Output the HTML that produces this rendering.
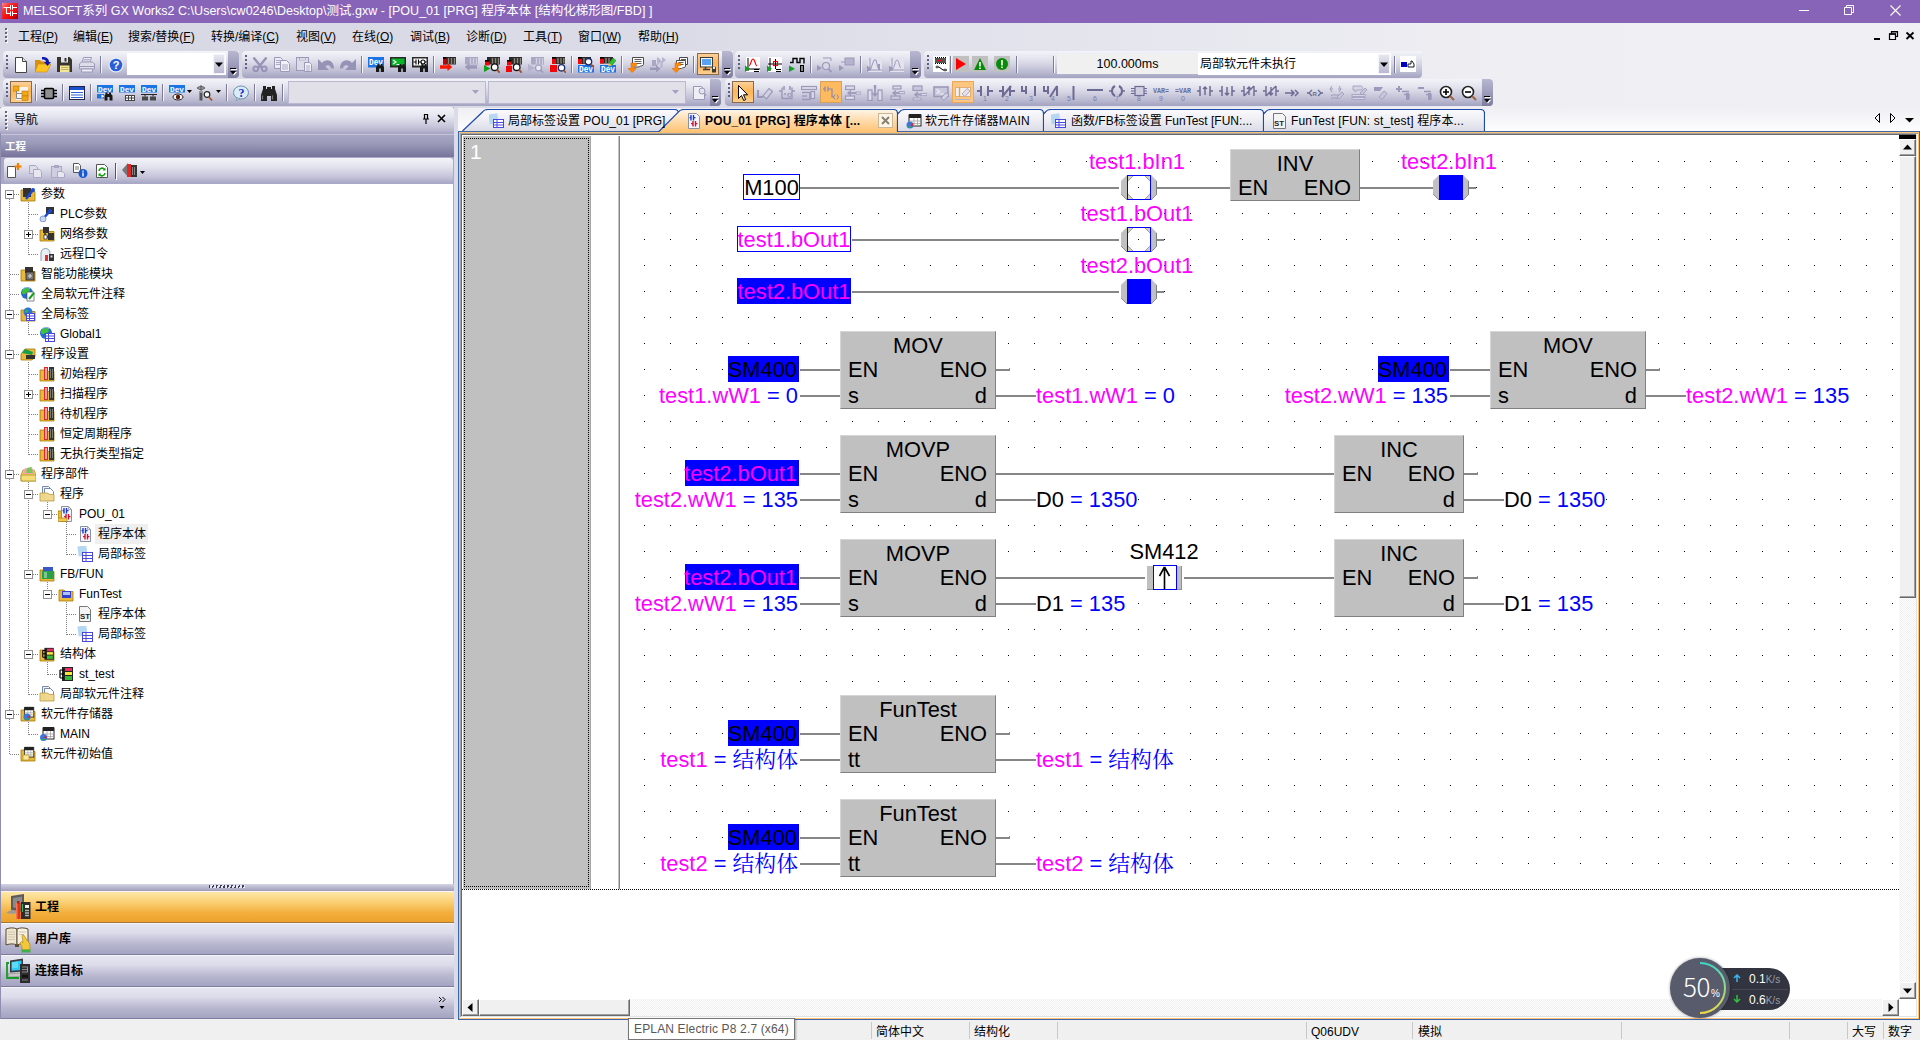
<!DOCTYPE html>
<html lang="zh-CN"><head><meta charset="utf-8"><title>MELSOFT GX Works2</title>
<style>
*{box-sizing:border-box}
html,body{margin:0;padding:0}
body{width:1920px;height:1040px;position:relative;overflow:hidden;background:#f0f0f0;font-family:"Liberation Sans","Noto Sans CJK SC",sans-serif;font-size:12px;color:#000}
.a{position:absolute}
.t{position:absolute;white-space:nowrap;line-height:16px}
#title{left:0;top:0;width:1920px;height:23px;background:#8764b8}
#menubg{left:0;top:23px;width:1920px;height:85px;background:linear-gradient(90deg,#d9d9e6 0,#dcdce8 40%,#ececf2 75%,#f0f0f4 100%)}
.tb{position:absolute;height:27px;border-radius:4px 0 4px 4px;background:linear-gradient(180deg,#f3f3f9 0,#e3e3ee 30%,#cfcfe0 55%,#b4b3cd 85%,#a3a2c0 100%)}
.tbo{position:absolute;top:0;right:0;width:11px;height:27px;border-radius:0 4px 4px 0;background:linear-gradient(180deg,#b9b8d0 0,#a09fbd 45%,#7f7d9e 100%)}
.grip{position:absolute;left:3px;top:4px;width:2px;height:14px;background:repeating-linear-gradient(180deg,#5f5d80 0,#5f5d80 2px,transparent 2px,transparent 4px)}
.grip:after{content:"";position:absolute;left:1px;top:1px;width:2px;height:14px;background:repeating-linear-gradient(180deg,#fff 0,#fff 2px,transparent 2px,transparent 4px);z-index:-1}
.sep{position:absolute;top:5px;width:2px;height:17px;border-left:1px solid #7f7d9e;border-right:1px solid #f4f4fa}
.sel{position:absolute;top:2px;width:22px;height:23px;border:1px solid #8a6a45;background:linear-gradient(180deg,#fbcf93 0,#fdb759 50%,#fcc779 100%)}
.d{font-family:"Liberation Sans","Noto Serif CJK SC",sans-serif;font-size:21.85px;line-height:26px}
.ic{position:absolute;width:16px;height:16px}

.m{position:absolute;top:29px;line-height:16px;white-space:nowrap;font-size:12px}
.ov{position:absolute;right:2px;top:17px;width:7px;height:8px}
.cb{position:absolute;background:#fff}
.tab{position:absolute;top:109px;height:23px}
.tt{position:absolute;top:113px;line-height:16px;white-space:nowrap;font-size:12px}

.tr{position:absolute;line-height:16px;white-space:nowrap;font-size:12px}
.pb{position:absolute;left:0;width:454px;height:32px;background:linear-gradient(180deg,#e6e6f0 0,#dcdcea 30%,#bdbcd3 60%,#a4a3c1 100%);border-top:1px solid #f4f4fa;border-bottom:1px solid #7f7d9e}
.pbt{position:absolute;left:35px;top:7px;font-weight:bold;font-size:12px;line-height:16px;white-space:nowrap}
</style></head>
<body>
<div class="a" style="left:458px;top:131px;width:1462px;height:889px;background:#3e66a8"></div>
<div class="a" style="left:459px;top:132px;width:1460px;height:887px;background:#fcc171"></div>
<div class="a" style="left:460px;top:133px;width:1458px;height:885px;background:#fff"></div>
<div class="a" style="left:460px;top:133px;width:1458px;height:1px;background:#a3a3a3"></div>
<div class="a" style="left:460px;top:134px;width:1457px;height:1px;background:#696969"></div>
<div class="a" style="left:460px;top:133px;width:1px;height:884px;background:#a3a3a3"></div>
<div class="a" style="left:461px;top:134px;width:1px;height:883px;background:#696969"></div>
<div class="a" style="left:461px;top:1016px;width:1456px;height:1px;background:#e3e3e3"></div>
<div class="a" style="left:1916px;top:134px;width:1px;height:883px;background:#e3e3e3"></div>
<div class="a" style="left:463px;top:136px;width:128px;height:753px;background:#c0c0c0"></div>
<div class="a" style="left:464px;top:138px;width:125px;height:749px;border:1px dotted #000"></div>
<div class="a" style="left:590px;top:136px;width:1px;height:753px;background:#a8a8a8"></div>
<div class="t" style="left:470px;top:140px;color:#fff;font-size:21px;line-height:24px">1</div>
<div class="a" style="left:618px;top:136px;width:1px;height:753px;background:#c4c4c4"></div>
<div class="a" style="left:619px;top:136px;width:1px;height:753px;background:#858585"></div>
<div class="a" style="left:462px;top:889px;width:1437px;height:1px;background:repeating-linear-gradient(90deg,#000 0,#000 1px,#fff 1px,#fff 2px)"></div>
<div class="a" style="left:1899px;top:135px;width:17px;height:864px;background:repeating-conic-gradient(#fff 0 25%,#efefef 0 50%) 0 0/2px 2px"></div>
<div class="a" style="left:1899px;top:135px;width:17px;height:4px;background:#000"></div>
<div class="a" style="left:1899px;top:139px;width:17px;height:17px;background:#f0f0f0;border-top:1px solid #fff;border-left:1px solid #fff;border-right:1px solid #696969;border-bottom:1px solid #696969;box-shadow:inset -1px -1px 0 #a0a0a0,inset 1px 1px 0 #f0f0f0"></div>
<svg class="a" style="left:1903px;top:144px" width="9" height="6"><path d="M0 5.500L4.500 0.500L9 5.500Z" fill="#000"/></svg>
<div class="a" style="left:1899px;top:156px;width:17px;height:442px;background:#f0f0f0;border-top:1px solid #fff;border-left:1px solid #fff;border-right:1px solid #696969;border-bottom:1px solid #696969;box-shadow:inset -1px -1px 0 #a0a0a0,inset 1px 1px 0 #f0f0f0"></div>
<div class="a" style="left:1899px;top:982px;width:17px;height:17px;background:#f0f0f0;border-top:1px solid #fff;border-left:1px solid #fff;border-right:1px solid #696969;border-bottom:1px solid #696969;box-shadow:inset -1px -1px 0 #a0a0a0,inset 1px 1px 0 #f0f0f0"></div>
<svg class="a" style="left:1903px;top:988px" width="9" height="6"><path d="M0 0.500L4.500 5.500L9 0.500Z" fill="#000"/></svg>
<div class="a" style="left:462px;top:999px;width:1437px;height:17px;background:repeating-conic-gradient(#fff 0 25%,#efefef 0 50%) 0 0/2px 2px"></div>
<div class="a" style="left:462px;top:999px;width:17px;height:17px;background:#f0f0f0;border-top:1px solid #fff;border-left:1px solid #fff;border-right:1px solid #696969;border-bottom:1px solid #696969;box-shadow:inset -1px -1px 0 #a0a0a0,inset 1px 1px 0 #f0f0f0"></div>
<svg class="a" style="left:467px;top:1003px" width="6" height="9"><path d="M5.500 0L0.500 4.500L5.500 9Z" fill="#000"/></svg>
<div class="a" style="left:479px;top:999px;width:151px;height:17px;background:#f0f0f0;border-top:1px solid #fff;border-left:1px solid #fff;border-right:1px solid #696969;border-bottom:1px solid #696969;box-shadow:inset -1px -1px 0 #a0a0a0,inset 1px 1px 0 #f0f0f0"></div>
<div class="a" style="left:1882px;top:999px;width:17px;height:17px;background:#f0f0f0;border-top:1px solid #fff;border-left:1px solid #fff;border-right:1px solid #696969;border-bottom:1px solid #696969;box-shadow:inset -1px -1px 0 #a0a0a0,inset 1px 1px 0 #f0f0f0"></div>
<svg class="a" style="left:1888px;top:1003px" width="6" height="9"><path d="M0.500 0L5.500 4.500L0.500 9Z" fill="#000"/></svg>
<div class="a" style="left:620px;top:136px;width:1278px;height:752px;background-image:radial-gradient(circle at .5px .5px,#000 0,#000 .6px,transparent .9px);background-size:26px 26px;background-position:24px 25px"></div>
<div class="a" style="left:743px;top:174px;width:57px;height:26px;border:1px solid #0000ff;background:#fff"></div>
<div class="t d" style="left:743px;top:175px;width:57px;text-align:center">M100</div>
<div class="a" style="left:800px;top:187px;width:319px;height:2px;background:#868686"></div>
<svg class="a" style="left:1120px;top:174px" width="38" height="27" viewBox="0 0 38 27"><polygon points="1,7 7,1 31,1 37,7 37,20 31,26 7,26 1,20" fill="#c0c0c0"/><path d="M36.5 7V20" stroke="#808080" stroke-width="1" fill="none"/><path d="M1 20L7 26M37 20L31 26" stroke="#909090" stroke-width="1" fill="none"/><rect x="7.5" y="1.5" width="23" height="24" fill="#d4d0c0" stroke="#0000ff" stroke-width="1"/><polygon points="13,2 25,2 30,7 30,20 25,25 13,25 8,20 8,7" fill="#fff"/><path d="M8 7L13 2M25 2L30 7M30 20L25 25M13 25L8 20" stroke="#a0a0a0" stroke-width="1" fill="none"/><rect x="18" y="13" width="1" height="1" fill="#000"/></svg>
<div class="a" style="left:1157px;top:187px;width:73px;height:2px;background:#868686"></div>
<div class="t d" style="left:1037px;top:149px;color:#ff00ff;width:200px;text-align:center">test1.bIn1</div>
<div class="a" style="left:1230px;top:149px;width:130px;height:52px;background:#c0c0c0;border-top:1px solid #d6d6d6;border-left:1px solid #d6d6d6;border-right:1px solid #808080;border-bottom:1px solid #808080"></div><div class="t d" style="left:1230px;top:151px;width:130px;text-align:center">INV</div><div class="t d" style="left:1238px;top:175px;">EN</div><div class="t d" style="left:1230px;top:175px;width:121px;text-align:right">ENO</div>
<div class="a" style="left:1360px;top:187px;width:73px;height:2px;background:#868686"></div>
<svg class="a" style="left:1432px;top:174px" width="38" height="27" viewBox="0 0 38 27"><polygon points="1,7 7,1 31,1 37,7 37,20 31,26 7,26 1,20" fill="#c0c0c0"/><path d="M36.5 7V20" stroke="#808080" stroke-width="1" fill="none"/><path d="M1 20L7 26M37 20L31 26" stroke="#909090" stroke-width="1" fill="none"/><rect x="7" y="1" width="24" height="25" fill="#0000ff"/></svg>
<div class="a" style="left:1469px;top:187px;width:7px;height:2px;background:#868686"></div>
<div class="t d" style="left:1349px;top:149px;color:#ff00ff;width:200px;text-align:center">test2.bIn1</div>
<div class="a" style="left:737px;top:226px;width:114px;height:26px;border:1px solid #0000ff;background:#fff"></div>
<div class="t d" style="left:737px;top:227px;width:114px;text-align:center;color:#ff00ff">test1.bOut1</div>
<div class="a" style="left:852px;top:239px;width:267px;height:2px;background:#868686"></div>
<svg class="a" style="left:1120px;top:226px" width="38" height="27" viewBox="0 0 38 27"><polygon points="1,7 7,1 31,1 37,7 37,20 31,26 7,26 1,20" fill="#c0c0c0"/><path d="M36.5 7V20" stroke="#808080" stroke-width="1" fill="none"/><path d="M1 20L7 26M37 20L31 26" stroke="#909090" stroke-width="1" fill="none"/><rect x="7.5" y="1.5" width="23" height="24" fill="#d4d0c0" stroke="#0000ff" stroke-width="1"/><polygon points="13,2 25,2 30,7 30,20 25,25 13,25 8,20 8,7" fill="#fff"/><path d="M8 7L13 2M25 2L30 7M30 20L25 25M13 25L8 20" stroke="#a0a0a0" stroke-width="1" fill="none"/><rect x="18" y="13" width="1" height="1" fill="#000"/></svg>
<div class="a" style="left:1157px;top:239px;width:7px;height:2px;background:#868686"></div>
<div class="t d" style="left:1037px;top:201px;color:#ff00ff;width:200px;text-align:center">test1.bOut1</div>
<div class="a" style="left:737px;top:278px;width:114px;height:26px;background:#0000ff"></div>
<div class="t d" style="left:737px;top:279px;width:114px;text-align:center;color:#ff00ff">test2.bOut1</div>
<div class="a" style="left:852px;top:291px;width:267px;height:2px;background:#868686"></div>
<svg class="a" style="left:1120px;top:278px" width="38" height="27" viewBox="0 0 38 27"><polygon points="1,7 7,1 31,1 37,7 37,20 31,26 7,26 1,20" fill="#c0c0c0"/><path d="M36.5 7V20" stroke="#808080" stroke-width="1" fill="none"/><path d="M1 20L7 26M37 20L31 26" stroke="#909090" stroke-width="1" fill="none"/><rect x="7" y="1" width="24" height="25" fill="#0000ff"/></svg>
<div class="a" style="left:1157px;top:291px;width:7px;height:2px;background:#868686"></div>
<div class="t d" style="left:1037px;top:253px;color:#ff00ff;width:200px;text-align:center">test2.bOut1</div>
<div class="a" style="left:728px;top:356px;width:71px;height:26px;background:#0000ff"></div><div class="t d" style="top:357px;right:1123px;">SM400</div>
<div class="a" style="left:800px;top:369px;width:40px;height:2px;background:#868686"></div>
<div class="t d" style="top:383px;right:1122px;left:auto;background:#fff;height:25px;"><span style="color:#ff00ff">test1.wW1</span><span style="color:#0000ff"> = 0</span></div>
<div class="a" style="left:800px;top:395px;width:40px;height:2px;background:#868686"></div>
<div class="a" style="left:840px;top:331px;width:156px;height:78px;background:#c0c0c0;border-top:1px solid #d6d6d6;border-left:1px solid #d6d6d6;border-right:1px solid #808080;border-bottom:1px solid #808080"></div><div class="t d" style="left:840px;top:333px;width:156px;text-align:center">MOV</div><div class="t d" style="left:848px;top:357px;">EN</div><div class="t d" style="left:848px;top:383px;">s</div><div class="t d" style="left:840px;top:357px;width:147px;text-align:right">ENO</div><div class="t d" style="left:840px;top:383px;width:147px;text-align:right">d</div>
<div class="a" style="left:996px;top:369px;width:14px;height:2px;background:#868686"></div><div class="a" style="left:1009px;top:368px;width:1px;height:2px;background:#868686"></div>
<div class="a" style="left:996px;top:395px;width:40px;height:2px;background:#868686"></div>
<div class="t d" style="left:1036px;top:383px;background:#fff;height:25px"><span style="color:#ff00ff">test1.wW1</span><span style="color:#0000ff"> = 0</span></div>
<div class="a" style="left:1378px;top:356px;width:71px;height:26px;background:#0000ff"></div><div class="t d" style="top:357px;right:473px;">SM400</div>
<div class="a" style="left:1450px;top:369px;width:40px;height:2px;background:#868686"></div>
<div class="t d" style="top:383px;right:472px;left:auto;background:#fff;height:25px;"><span style="color:#ff00ff">test2.wW1</span><span style="color:#0000ff"> = 135</span></div>
<div class="a" style="left:1450px;top:395px;width:40px;height:2px;background:#868686"></div>
<div class="a" style="left:1490px;top:331px;width:156px;height:78px;background:#c0c0c0;border-top:1px solid #d6d6d6;border-left:1px solid #d6d6d6;border-right:1px solid #808080;border-bottom:1px solid #808080"></div><div class="t d" style="left:1490px;top:333px;width:156px;text-align:center">MOV</div><div class="t d" style="left:1498px;top:357px;">EN</div><div class="t d" style="left:1498px;top:383px;">s</div><div class="t d" style="left:1490px;top:357px;width:147px;text-align:right">ENO</div><div class="t d" style="left:1490px;top:383px;width:147px;text-align:right">d</div>
<div class="a" style="left:1646px;top:369px;width:14px;height:2px;background:#868686"></div><div class="a" style="left:1659px;top:368px;width:1px;height:2px;background:#868686"></div>
<div class="a" style="left:1646px;top:395px;width:40px;height:2px;background:#868686"></div>
<div class="t d" style="left:1686px;top:383px;background:#fff;height:25px"><span style="color:#ff00ff">test2.wW1</span><span style="color:#0000ff"> = 135</span></div>
<div class="a" style="left:685px;top:460px;width:114px;height:26px;background:#0000ff"></div><div class="t d" style="top:461px;right:1123px;"><span style="color:#ff00ff">test2.bOut1</span></div>
<div class="a" style="left:800px;top:473px;width:40px;height:2px;background:#868686"></div>
<div class="t d" style="top:487px;right:1122px;left:auto;background:#fff;height:25px;"><span style="color:#ff00ff">test2.wW1</span><span style="color:#0000ff"> = 135</span></div>
<div class="a" style="left:800px;top:499px;width:40px;height:2px;background:#868686"></div>
<div class="a" style="left:840px;top:435px;width:156px;height:78px;background:#c0c0c0;border-top:1px solid #d6d6d6;border-left:1px solid #d6d6d6;border-right:1px solid #808080;border-bottom:1px solid #808080"></div><div class="t d" style="left:840px;top:437px;width:156px;text-align:center">MOVP</div><div class="t d" style="left:848px;top:461px;">EN</div><div class="t d" style="left:848px;top:487px;">s</div><div class="t d" style="left:840px;top:461px;width:147px;text-align:right">ENO</div><div class="t d" style="left:840px;top:487px;width:147px;text-align:right">d</div>
<div class="a" style="left:996px;top:473px;width:338px;height:2px;background:#868686"></div>
<div class="a" style="left:996px;top:499px;width:40px;height:2px;background:#868686"></div>
<div class="t d" style="left:1036px;top:487px;background:#fff;height:25px">D0<span style="color:#0000ff"> = 1350</span></div>
<div class="a" style="left:1334px;top:435px;width:130px;height:78px;background:#c0c0c0;border-top:1px solid #d6d6d6;border-left:1px solid #d6d6d6;border-right:1px solid #808080;border-bottom:1px solid #808080"></div><div class="t d" style="left:1334px;top:437px;width:130px;text-align:center">INC</div><div class="t d" style="left:1342px;top:461px;">EN</div><div class="t d" style="left:1334px;top:461px;width:121px;text-align:right">ENO</div><div class="t d" style="left:1334px;top:487px;width:121px;text-align:right">d</div>
<div class="a" style="left:1464px;top:473px;width:14px;height:2px;background:#868686"></div><div class="a" style="left:1477px;top:472px;width:1px;height:2px;background:#868686"></div>
<div class="a" style="left:1464px;top:499px;width:40px;height:2px;background:#868686"></div>
<div class="t d" style="left:1504px;top:487px;background:#fff;height:25px">D0<span style="color:#0000ff"> = 1350</span></div>
<div class="a" style="left:685px;top:564px;width:114px;height:26px;background:#0000ff"></div><div class="t d" style="top:565px;right:1123px;"><span style="color:#ff00ff">test2.bOut1</span></div>
<div class="a" style="left:800px;top:577px;width:40px;height:2px;background:#868686"></div>
<div class="t d" style="top:591px;right:1122px;left:auto;background:#fff;height:25px;"><span style="color:#ff00ff">test2.wW1</span><span style="color:#0000ff"> = 135</span></div>
<div class="a" style="left:800px;top:603px;width:40px;height:2px;background:#868686"></div>
<div class="a" style="left:840px;top:539px;width:156px;height:78px;background:#c0c0c0;border-top:1px solid #d6d6d6;border-left:1px solid #d6d6d6;border-right:1px solid #808080;border-bottom:1px solid #808080"></div><div class="t d" style="left:840px;top:541px;width:156px;text-align:center">MOVP</div><div class="t d" style="left:848px;top:565px;">EN</div><div class="t d" style="left:848px;top:591px;">s</div><div class="t d" style="left:840px;top:565px;width:147px;text-align:right">ENO</div><div class="t d" style="left:840px;top:591px;width:147px;text-align:right">d</div>
<div class="a" style="left:996px;top:577px;width:149px;height:2px;background:#868686"></div>
<svg class="a" style="left:1146px;top:565px" width="37" height="25" viewBox="0 0 37 25"><rect x="1" y="1" width="35" height="24" fill="#c0c0c0"/><path d="M1 24.5H36M35.5 1V25" stroke="#909090" fill="none"/><rect x="7.5" y="0.5" width="23" height="24" fill="#fff" stroke="#0000ff"/><path d="M18.5 2V24M18.5 2L13.5 11M18.5 2L23.5 11" stroke="#000" stroke-width="1.6" fill="none"/></svg>
<div class="t d" style="left:1064px;top:539px;width:200px;text-align:center">SM412</div>
<div class="a" style="left:1184px;top:577px;width:150px;height:2px;background:#868686"></div>
<div class="a" style="left:996px;top:603px;width:40px;height:2px;background:#868686"></div>
<div class="t d" style="left:1036px;top:591px;background:#fff;height:25px">D1<span style="color:#0000ff"> = 135</span></div>
<div class="a" style="left:1334px;top:539px;width:130px;height:78px;background:#c0c0c0;border-top:1px solid #d6d6d6;border-left:1px solid #d6d6d6;border-right:1px solid #808080;border-bottom:1px solid #808080"></div><div class="t d" style="left:1334px;top:541px;width:130px;text-align:center">INC</div><div class="t d" style="left:1342px;top:565px;">EN</div><div class="t d" style="left:1334px;top:565px;width:121px;text-align:right">ENO</div><div class="t d" style="left:1334px;top:591px;width:121px;text-align:right">d</div>
<div class="a" style="left:1464px;top:577px;width:14px;height:2px;background:#868686"></div><div class="a" style="left:1477px;top:576px;width:1px;height:2px;background:#868686"></div>
<div class="a" style="left:1464px;top:603px;width:40px;height:2px;background:#868686"></div>
<div class="t d" style="left:1504px;top:591px;background:#fff;height:25px">D1<span style="color:#0000ff"> = 135</span></div>
<div class="a" style="left:728px;top:720px;width:71px;height:26px;background:#0000ff"></div><div class="t d" style="top:721px;right:1123px;">SM400</div>
<div class="a" style="left:800px;top:733px;width:40px;height:2px;background:#868686"></div>
<div class="t d" style="top:747px;right:1122px;left:auto;background:#fff;height:25px;"><span style="color:#ff00ff">test1</span><span style="color:#0000ff"> = 结构体</span></div>
<div class="a" style="left:800px;top:759px;width:40px;height:2px;background:#868686"></div>
<div class="a" style="left:840px;top:695px;width:156px;height:78px;background:#c0c0c0;border-top:1px solid #d6d6d6;border-left:1px solid #d6d6d6;border-right:1px solid #808080;border-bottom:1px solid #808080"></div><div class="t d" style="left:840px;top:697px;width:156px;text-align:center">FunTest</div><div class="t d" style="left:848px;top:721px;">EN</div><div class="t d" style="left:848px;top:747px;">tt</div><div class="t d" style="left:840px;top:721px;width:147px;text-align:right">ENO</div>
<div class="a" style="left:996px;top:733px;width:14px;height:2px;background:#868686"></div><div class="a" style="left:1009px;top:732px;width:1px;height:2px;background:#868686"></div>
<div class="a" style="left:996px;top:759px;width:40px;height:2px;background:#868686"></div>
<div class="t d" style="left:1036px;top:747px;background:#fff;height:25px"><span style="color:#ff00ff">test1</span><span style="color:#0000ff"> = 结构体</span></div>
<div class="a" style="left:728px;top:824px;width:71px;height:26px;background:#0000ff"></div><div class="t d" style="top:825px;right:1123px;">SM400</div>
<div class="a" style="left:800px;top:837px;width:40px;height:2px;background:#868686"></div>
<div class="t d" style="top:851px;right:1122px;left:auto;background:#fff;height:25px;"><span style="color:#ff00ff">test2</span><span style="color:#0000ff"> = 结构体</span></div>
<div class="a" style="left:800px;top:863px;width:40px;height:2px;background:#868686"></div>
<div class="a" style="left:840px;top:799px;width:156px;height:78px;background:#c0c0c0;border-top:1px solid #d6d6d6;border-left:1px solid #d6d6d6;border-right:1px solid #808080;border-bottom:1px solid #808080"></div><div class="t d" style="left:840px;top:801px;width:156px;text-align:center">FunTest</div><div class="t d" style="left:848px;top:825px;">EN</div><div class="t d" style="left:848px;top:851px;">tt</div><div class="t d" style="left:840px;top:825px;width:147px;text-align:right">ENO</div>
<div class="a" style="left:996px;top:837px;width:14px;height:2px;background:#868686"></div><div class="a" style="left:1009px;top:836px;width:1px;height:2px;background:#868686"></div>
<div class="a" style="left:996px;top:863px;width:40px;height:2px;background:#868686"></div>
<div class="t d" style="left:1036px;top:851px;background:#fff;height:25px"><span style="color:#ff00ff">test2</span><span style="color:#0000ff"> = 结构体</span></div>
<div class="a" style="left:0px;top:0px;width:1920px;height:23px;background:#8764b8"></div>
<svg class="a" style="left:2px;top:3px" width="16" height="16" viewBox="0 0 16 16"><defs><linearGradient id="ai" x1="0" y1="0" x2="1" y2="1"><stop offset="0" stop-color="#ff8a8a"/><stop offset=".3" stop-color="#fb2a2a"/><stop offset=".7" stop-color="#ee0404"/><stop offset="1" stop-color="#9a0000"/></linearGradient></defs><rect width="16" height="16" fill="url(#ai)"/><path d="M1.500 4.500h7M11 4.500h4M4.500 4.500v6h3.700M11 10.500h4" stroke="#fff" stroke-width="1.100" fill="none"/><path d="M8.500 2v4.700M10.500 2v4.700M8.500 8.300v4.700M10.500 8.300v4.700" stroke="#fff" stroke-width="1" fill="none"/></svg>
<div class="t" style="left:23px;top:3px;color:#fff;font-size:12.500px;line-height:17px;letter-spacing:.02px">MELSOFT系列 GX Works2 C:\Users\cw0246\Desktop\测试.gxw - [POU_01 [PRG] 程序本体 [结构化梯形图/FBD] ]</div>
<svg class="a" style="left:1799px;top:5px" width="11" height="11"><path d="M0 5.500h10" stroke="#fff"/></svg>
<svg class="a" style="left:1844px;top:5px" width="11" height="11"><path d="M2.500 2.500v-2h7v7h-2M.5 2.500h7v7h-7z" stroke="#fff" fill="none"/></svg>
<svg class="a" style="left:1890px;top:5px" width="11" height="11"><path d="M.5 .5l10 10M10.500 .5l-10 10" stroke="#fff" stroke-width="1.100"/></svg>
<div class="a" style="left:0px;top:23px;width:1920px;height:85px;background:linear-gradient(90deg,#d8d8e5 0,#dbdbe7 35%,#e6e6ee 60%,#eeeef3 78%,#f0f0f4 100%)"></div>
<div class="a" style="left:6px;top:29px;width:2px;height:14px;background:repeating-linear-gradient(180deg,#fff 0,#fff 2px,transparent 2px,transparent 4px)"></div>
<div class="a" style="left:5px;top:28px;width:2px;height:14px;background:repeating-linear-gradient(180deg,#63617f 0,#63617f 2px,transparent 2px,transparent 4px)"></div>
<div class="m" style="left:18px">工程(<u>P</u>)</div>
<div class="m" style="left:73px">编辑(<u>E</u>)</div>
<div class="m" style="left:128px">搜索/替换(<u>F</u>)</div>
<div class="m" style="left:211px">转换/编译(<u>C</u>)</div>
<div class="m" style="left:296px">视图(<u>V</u>)</div>
<div class="m" style="left:352px">在线(<u>O</u>)</div>
<div class="m" style="left:410px">调试(<u>B</u>)</div>
<div class="m" style="left:466px">诊断(<u>D</u>)</div>
<div class="m" style="left:523px">工具(<u>T</u>)</div>
<div class="m" style="left:578px">窗口(<u>W</u>)</div>
<div class="m" style="left:638px">帮助(<u>H</u>)</div>
<svg class="a" style="left:1873px;top:31px" width="44" height="10" viewBox="0 0 44 10"><path d="M1 8h6" stroke="#000" stroke-width="2"/><path d="M18.500 2.500v-2h6v5h-2M16.500 3h6v5.500h-6z" stroke="#000" stroke-width="1.200" fill="none"/><path d="M16 3h7M18 .8h7" stroke="#000" stroke-width="1.600"/><path d="M33.500 1.500l7 6.500M40.500 1.500l-7 6.500" stroke="#000" stroke-width="1.800"/></svg>
<div class="tb" style="left:3px;top:51px;width:236px;height:27px;"><div class="grip"></div><div class="tbo"><svg class="ov" viewBox="0 0 7 8"><path d="M1 1.500h6" stroke="#fff"/><path d="M0 .5h6" stroke="#000"/><path d="M1 4h6l-3 3.500z" fill="#fff"/><path d="M0 3h6l-3 3.500z" fill="#000"/></svg></div></div>
<div class="tb" style="left:242px;top:51px;width:491px;height:27px;"><div class="grip"></div><div class="tbo"><svg class="ov" viewBox="0 0 7 8"><path d="M1 1.500h6" stroke="#fff"/><path d="M0 .5h6" stroke="#000"/><path d="M1 4h6l-3 3.500z" fill="#fff"/><path d="M0 3h6l-3 3.500z" fill="#000"/></svg></div></div>
<div class="tb" style="left:735px;top:51px;width:186px;height:27px;"><div class="grip"></div><div class="tbo"><svg class="ov" viewBox="0 0 7 8"><path d="M1 1.500h6" stroke="#fff"/><path d="M0 .5h6" stroke="#000"/><path d="M1 4h6l-3 3.500z" fill="#fff"/><path d="M0 3h6l-3 3.500z" fill="#000"/></svg></div></div>
<div class="tb" style="left:924px;top:51px;width:498px;height:27px;"><div class="grip"></div></div>
<svg class="a" style="left:13px;top:57px" width="16" height="16" viewBox="0 0 16 16"><path d="M2.5 .5h7l4 4v11h-11z" fill="#fff" stroke="#444"/><path d="M9.5 .5v4h4" fill="#e8e8e8" stroke="#444"/></svg>
<svg class="a" style="left:35px;top:57px" width="16" height="16" viewBox="0 0 16 16"><path d="M0 3h5l1.500 1.500h5.500V15H0z" fill="#d8900c"/><path d="M0 15l3-8h13l-4 8z" fill="#fcc424" stroke="#c88a08" stroke-width=".6"/><path d="M7 0c5 0 7 2 7 5h2l-3.500 4-3.500-4h2c0-2-1.500-2.500-4-2.500z" fill="#0c1cb0"/></svg>
<svg class="a" style="left:57px;top:57px" width="16" height="16" viewBox="0 0 16 16"><path d="M0 0h12.500l2.500 2.500V15H0z" fill="#38342e"/><rect x="4" y="0" width="7" height="5.500" fill="#e4e4ee"/><rect x="7.500" y="1" width="2" height="3.500" fill="#38342e"/><rect x="3" y="8.500" width="9.500" height="6.500" fill="#f6e698"/><path d="M4 10.500h7.500M4 12.500h7.500" stroke="#b8a858" stroke-width=".9"/></svg>
<svg class="a" style="left:79px;top:57px" width="16" height="16" viewBox="0 0 16 16"><path d="M4.500 .5h8l-1.500 5h-8z" fill="#eeedf5" stroke="#9b99b9"/><path d="M5 2.500h6M4.500 4h6" stroke="#9b99b9" stroke-width=".7"/><path d="M.5 7l2-2h11l2 2v5h-15z" fill="#dddce8" stroke="#9b99b9"/><path d="M.5 9.500h15" stroke="#9b99b9"/><path d="M2.500 12h11v3h-11z" fill="#eeedf5" stroke="#9b99b9"/></svg>
<svg class="a" style="left:108px;top:57px" width="16" height="16" viewBox="0 0 16 16"><circle cx="8" cy="8" r="7.5" fill="#e8eefc"/><circle cx="8" cy="8" r="6.3" fill="#2a5fd8"/><text x="8" y="12" text-anchor="middle" font-family="Liberation Sans,sans-serif" font-weight="bold" font-size="11" fill="#fff">?</text></svg>
<div class="a" style="left:100px;top:56px;width:2px;height:17px;border-left:1px solid #7d7b9c;border-right:1px solid #f6f6fb"></div>
<div class="a" style="left:127px;top:53px;width:99px;height:22px;background:#fff"></div>
<div class="a" style="left:213px;top:54px;width:12px;height:20px;background:linear-gradient(180deg,#e6e6f0,#b9b8d0);border:1px solid #f4f4fa"></div>
<svg class="a" style="left:215px;top:62px" width="8" height="5"><path d="M0 .5h8l-4 4.500z" fill="#000"/></svg>
<svg class="a" style="left:252px;top:57px" width="16" height="16" viewBox="0 0 16 16"><path d="M1.500 .5L10 11M14.500 .5L6 11" stroke="#9694b6" stroke-width="2.400" fill="none"/><circle cx="3.800" cy="11.800" r="2.400" fill="none" stroke="#9694b6" stroke-width="2"/><circle cx="12.200" cy="11.800" r="2.400" fill="none" stroke="#9694b6" stroke-width="2"/></svg>
<svg class="a" style="left:274px;top:57px" width="16" height="16" viewBox="0 0 16 16"><path d="M.5 .5h6l2 2v9h-8z" fill="#ecebf3" stroke="#9b99b9"/><path d="M2 3.500h4M2 5.500h5M2 7.500h5" stroke="#9b99b9" stroke-width=".8"/><path d="M6.500 3.500h6l3 3v8h-9z" fill="#f2f1f7" stroke="#9b99b9"/><path d="M8 8h6M8 10h6M8 12h6" stroke="#9b99b9" stroke-width=".8"/></svg>
<svg class="a" style="left:296px;top:57px" width="16" height="16" viewBox="0 0 16 16"><rect x=".5" y=".5" width="12" height="13" fill="#dcdbe8" stroke="#9b99b9"/><rect x="3.500" y="1" width="6" height="2" fill="#f4f4f8" stroke="#9b99b9" stroke-width=".6"/><path d="M8.500 5.500h5l2 2v7h-7z" fill="#f2f1f7" stroke="#9b99b9"/><path d="M10 9h4M10 11h4M10 13h4" stroke="#9b99b9" stroke-width=".8"/></svg>
<svg class="a" style="left:318px;top:57px" width="16" height="16" viewBox="0 0 16 16"><path d="M0 2V13H11L7.500 9.500C9 7.500 12.500 8 13 11.500H16C16 3 8 1 4 6Z" fill="#9694b6"/></svg>
<svg class="a" style="left:340px;top:57px" width="16" height="16" viewBox="0 0 16 16"><path d="M16 2V13H5L8.500 9.500C7 7.500 3.500 8 3 11.500H0C0 3 8 1 12 6Z" fill="#9694b6"/></svg>
<svg class="a" style="left:368px;top:57px" width="16" height="16" viewBox="0 0 16 16"><rect x="0" y="0" width="16" height="10.500" fill="#1a74e6"/><text x="1" y="8" font-family="Liberation Mono,monospace" font-weight="bold" font-size="9" fill="#fff" textLength="14" lengthAdjust="spacingAndGlyphs">Dev</text><path d="M9.500 7h1.800v1.500h1.400V7h1.800v1.500l1.500 1.500v5h-3.200v-3.500h-1.600V15H8v-5l1.500-1.500z" fill="#181818"/></svg>
<svg class="a" style="left:390px;top:57px" width="16" height="16" viewBox="0 0 16 16"><rect x="0" y="0" width="16" height="10.500" fill="#2a2a2a"/><rect x="1.500" y="1.500" width="13" height="7" fill="#08b428"/><path d="M3 3l3 2-3 2M6.500 7.500h4" stroke="#fff" stroke-width="1.100" fill="none"/><path d="M9.500 7h1.800v1.500h1.400V7h1.800v1.500l1.500 1.500v5h-3.200v-3.500h-1.600V15H8v-5l1.500-1.500z" fill="#181818"/></svg>
<svg class="a" style="left:412px;top:57px" width="16" height="16" viewBox="0 0 16 16"><rect x="0" y="0" width="16" height="10.500" fill="#2a2a2a"/><rect x="1.500" y="1.500" width="13" height="7" fill="#fff"/><path d="M1.500 5h2.500M4 2.500v5M6.500 2.500v5M6.500 5h2.500M13 5h1.500" stroke="#000" stroke-width="1.100"/><circle cx="11" cy="5" r="2" fill="none" stroke="#000" stroke-width="1.100"/><path d="M9.500 7h1.800v1.500h1.400V7h1.800v1.500l1.500 1.500v5h-3.200v-3.500h-1.600V15H8v-5l1.500-1.500z" fill="#181818"/></svg>
<svg class="a" style="left:440px;top:57px" width="16" height="16" viewBox="0 0 16 16"><rect x="3" y="0" width="13" height="7.500" fill="#2a2a2a"/><path d="M8.500 1v6M11.500 1v6M14.500 1v6" stroke="#8a8678" stroke-width="1.400"/><rect x="3" y="1" width="3.500" height="6.500" fill="#c80000"/><rect x="3" y="0" width="3.500" height="1.800" fill="#000"/><path d="M0 8.200h7.500V6l4.800 4-4.800 4v-2.300H0z" fill="#f81800"/></svg>
<svg class="a" style="left:462px;top:57px" width="16" height="16" viewBox="0 0 16 16"><rect x="3" y="0" width="13" height="7.500" fill="#a9a7c4"/><path d="M8.500 1v6M11.500 1v6M14.500 1v6" stroke="#d0cfe0" stroke-width="1.400"/><path d="M15 8.200H7.500V6L2.700 10l4.800 4v-2.300H15z" fill="#9b99b9"/></svg>
<svg class="a" style="left:484px;top:57px" width="16" height="16" viewBox="0 0 16 16"><rect x="3" y="0" width="13" height="7.500" fill="#2a2a2a"/><path d="M8.500 1v6M11.500 1v6M14.500 1v6" stroke="#8a8678" stroke-width="1.400"/><rect x="1" y="3" width="4.500" height="5.500" fill="#f00808"/><rect x="1" y="3" width="4.500" height="1.600" fill="#000"/><path d="M0 8l6.500 3.500L0 15z" fill="#10a018"/><circle cx="10.700" cy="10.200" r="3.300" fill="#fff" stroke="#111" stroke-width="1.300"/><path d="M13 12.700l2.700 3" stroke="#a0522d" stroke-width="2"/></svg>
<svg class="a" style="left:506px;top:57px" width="16" height="16" viewBox="0 0 16 16"><rect x="3" y="0" width="13" height="7.500" fill="#2a2a2a"/><path d="M8.500 1v6M11.500 1v6M14.500 1v6" stroke="#8a8678" stroke-width="1.400"/><rect x="1" y="3" width="4.500" height="5.500" fill="#f00808"/><rect x="1" y="3" width="4.500" height="1.600" fill="#000"/><rect x="0" y="9" width="6" height="6" fill="#f00808"/><circle cx="10.700" cy="10.200" r="3.300" fill="#fff" stroke="#111" stroke-width="1.300"/><path d="M13 12.700l2.700 3" stroke="#a0522d" stroke-width="2"/></svg>
<svg class="a" style="left:528px;top:57px" width="16" height="16" viewBox="0 0 16 16"><rect x="3" y="0" width="13" height="7.500" fill="#a9a7c4"/><path d="M8.500 1v6M11.500 1v6M14.500 1v6" stroke="#d0cfe0" stroke-width="1.400"/><path d="M0 7l7 4-7 4z" fill="#b4b2cc"/><circle cx="10.500" cy="11" r="3" fill="#e8e7f0" stroke="#9b99b9" stroke-width="1.200"/><path d="M12.700 13.300l2.300 2.200" stroke="#9b99b9" stroke-width="1.500"/></svg>
<svg class="a" style="left:550px;top:57px" width="16" height="16" viewBox="0 0 16 16"><rect x="2" y="0" width="13" height="7" fill="#2a2a2a"/><path d="M8 1v5.500M11 1v5.500M13.800 1v5.500" stroke="#8a8678" stroke-width="1.400"/><rect x="2" y="1.500" width="4" height="5.500" fill="#f00808"/><rect x="2" y="0" width="4" height="1.600" fill="#000"/><rect x="0" y="8" width="7" height="7" fill="#f00808"/><circle cx="11.500" cy="10.800" r="3.200" fill="#fff" stroke="#1a2a68" stroke-width="1.300"/><path d="M13.800 13.300l2.200 2.500" stroke="#a0522d" stroke-width="1.800"/></svg>
<svg class="a" style="left:578px;top:57px" width="16" height="16" viewBox="0 0 16 16"><rect x="0" y="0" width="13" height="7" fill="#2a2a2a"/><path d="M6 1v5.500M9 1v5.500" stroke="#8a8678" stroke-width="1.400"/><rect x="0" y="1.500" width="4" height="5.500" fill="#f00808"/><rect x="0" y="0" width="4" height="1.600" fill="#000"/><rect x="0" y="8" width="16" height="7.500" fill="#1a74e6"/><text x="1" y="15.300" font-family="Liberation Mono,monospace" font-weight="bold" font-size="9" fill="#fff" textLength="14" lengthAdjust="spacingAndGlyphs">Dev</text><circle cx="10.500" cy="4.700" r="3.200" fill="#fff" stroke="#1a2a68" stroke-width="1.300"/><path d="M12.800 7.200l2.500 2.600" stroke="#a0522d" stroke-width="1.800"/></svg>
<svg class="a" style="left:600px;top:57px" width="16" height="16" viewBox="0 0 16 16"><rect x="0" y="0" width="13" height="6.500" fill="#2a2a2a"/><path d="M6 1v5M9 1v5" stroke="#8a8678" stroke-width="1.400"/><rect x="0" y="1.500" width="4" height="5" fill="#f00808"/><rect x="0" y="0" width="4" height="1.600" fill="#000"/><rect x="0" y="8" width="16" height="7.500" fill="#1a74e6"/><text x="1" y="15.300" font-family="Liberation Mono,monospace" font-weight="bold" font-size="9" fill="#fff" textLength="14" lengthAdjust="spacingAndGlyphs">Dev</text><path d="M9 6l4-5 3 2.500-4 5z" fill="#30c030" stroke="#207820" stroke-width=".5"/><path d="M9 6l-1 3.500 4-1z" fill="#e8c040"/></svg>
<svg class="a" style="left:628px;top:57px" width="16" height="16" viewBox="0 0 16 16"><path d="M4.500 .5h11v7c0 1.500-3 1-4.500 2.500H4.500z" fill="#fff" stroke="#4a4a4a"/><path d="M6.500 2.500h7M6.500 4.500h7M6.500 6.500h7" stroke="#4a4a4a" stroke-width=".9"/><path d="M3 6h5.500v2.800H6v2.700h2.200L4.200 15.500 0 11.500h3z" fill="#ff8a00" stroke="#e06000" stroke-width=".5"/></svg>
<svg class="a" style="left:650px;top:57px" width="16" height="16" viewBox="0 0 16 16"><path d="M0 10.500h6V8l4.500 3.800L6 15.500V13H0z" fill="#9b99b9"/><rect x="2" y="3" width="4" height="6" fill="#a9a7c4"/><rect x="10" y="4" width="3" height="7" fill="#bebcd4"/><path d="M7 0l4 3-4 3zM12 0l4 3-4 3z" fill="#b4b2cc"/><path d="M6 9l4-5" stroke="#9b99b9"/></svg>
<svg class="a" style="left:672px;top:57px" width="16" height="16" viewBox="0 0 16 16"><path d="M7.500 .5h8v7h-8z" fill="#fff" stroke="#4a4a4a"/><path d="M9 2.500h5" stroke="#4a4a4a" stroke-width=".9"/><path d="M4.500 3.500h9v6c0 1-3 1-4 2H4.500z" fill="#fff" stroke="#4a4a4a"/><path d="M6.500 5.500h5M6.500 7.500h5" stroke="#4a4a4a" stroke-width=".9"/><path d="M3 6h5.500v2.800H6v2.700h2.200L4.200 15.500 0 11.500h3z" fill="#ff8a00" stroke="#e06000" stroke-width=".5"/></svg>
<div class="a" style="left:361px;top:56px;width:2px;height:17px;border-left:1px solid #7d7b9c;border-right:1px solid #f6f6fb"></div><div class="a" style="left:433px;top:56px;width:2px;height:17px;border-left:1px solid #7d7b9c;border-right:1px solid #f6f6fb"></div><div class="a" style="left:571px;top:56px;width:2px;height:17px;border-left:1px solid #7d7b9c;border-right:1px solid #f6f6fb"></div><div class="a" style="left:621px;top:56px;width:2px;height:17px;border-left:1px solid #7d7b9c;border-right:1px solid #f6f6fb"></div><div class="a" style="left:693px;top:56px;width:2px;height:17px;border-left:1px solid #7d7b9c;border-right:1px solid #f6f6fb"></div>
<div class="a" style="left:697px;top:53px;width:22px;height:22px;border:1px solid #8b6b48;background:linear-gradient(180deg,#fbd09a 0,#fdb657 45%,#fdbd66 70%,#fcd092 100%)"></div>
<svg class="a" style="left:700px;top:57px" width="16" height="16" viewBox="0 0 16 16"><rect x=".5" y=".5" width="12" height="9.500" fill="#f4f4f4" stroke="#3a3a3a"/><rect x="2" y="2" width="9" height="6" fill="#5aa2f2"/><path d="M5.500 10v2M3 12.500h7" stroke="#3a3a3a" stroke-width="1.400"/><path d="M12 11c0-2.500 4-2.500 4 0v4.500h-4z" fill="#3a3a3a"/><rect x="13" y="9.500" width="2" height="2.500" fill="#e8e8e8"/></svg>
<svg class="a" style="left:745px;top:57px" width="16" height="16" viewBox="0 0 16 16"><rect x="1" y="0" width="14" height="15" fill="#fff"/><path d="M3 1v13M1 12h14" stroke="#000"/><path d="M4 9c2-1 2-7 4-7s2 6 4 7" fill="none" stroke="#f00" stroke-width="1.200"/><path d="M0 8.500l5 3.200-5 3.300z" fill="#12a020"/><path d="M9 12.500h5M9 14.500h5" stroke="#000"/></svg>
<svg class="a" style="left:767px;top:57px" width="16" height="16" viewBox="0 0 16 16"><rect x="1" y="0" width="14" height="15" fill="#fff"/><path d="M3 1v13M1 7h14" stroke="#000"/><rect x="6.500" y="4.500" width="4" height="4" fill="none" stroke="#f00" stroke-width="1.200"/><path d="M8.500 2v10" stroke="#000"/><path d="M0 8.500l5 3.200-5 3.300z" fill="#12a020"/><path d="M9 12.500h5M9 14.500h5" stroke="#000"/></svg>
<svg class="a" style="left:789px;top:57px" width="16" height="16" viewBox="0 0 16 16"><path d="M1 5.500h3v-4h4v4h3v-4h4v5" fill="none" stroke="#000" stroke-width="1.400"/><path d="M0 8.500l6 3.200-6 3.300z" fill="#12a020"/><rect x="11.500" y="8.500" width="3" height="6" fill="#888" stroke="#000"/></svg>
<svg class="a" style="left:817px;top:57px" width="16" height="16" viewBox="0 0 16 16"><path d="M0 8l5 3-5 3z" fill="#9b99b9"/><circle cx="9" cy="9" r="3.500" fill="#d8d7e6" stroke="#9b99b9" stroke-width="1.200"/><path d="M11.500 12l3 3" stroke="#9b99b9" stroke-width="1.800"/><path d="M6 1h8v3" fill="none" stroke="#9b99b9"/></svg>
<svg class="a" style="left:839px;top:57px" width="16" height="16" viewBox="0 0 16 16"><path d="M0 8l5 3-5 3z" fill="#9b99b9"/><rect x="6" y="1" width="9" height="7" fill="#b4b2cc" stroke="#9b99b9"/><path d="M2 5h4" stroke="#9b99b9"/></svg>
<svg class="a" style="left:867px;top:57px" width="16" height="16" viewBox="0 0 16 16"><rect x="1" y="0" width="14" height="15" fill="#e3e2ee"/><path d="M3 1v13M1 13h14" stroke="#9b99b9"/><path d="M4 11l3-8h2l2 8" fill="none" stroke="#9b99b9"/><path d="M0 8.500l5 3.200-5 3.300z" fill="#9b99b9"/><rect x="11" y="7" width="2" height="6" fill="#9b99b9"/></svg>
<svg class="a" style="left:889px;top:57px" width="16" height="16" viewBox="0 0 16 16"><rect x="1" y="0" width="14" height="15" fill="#e3e2ee"/><path d="M3 1v13M1 13h14" stroke="#9b99b9"/><path d="M4 11c2-1 2-8 4-8s2 7 4 8" fill="none" stroke="#9b99b9"/><path d="M0 8.500l5 3.200-5 3.300z" fill="#9b99b9"/></svg>
<div class="a" style="left:810px;top:56px;width:2px;height:17px;border-left:1px solid #7d7b9c;border-right:1px solid #f6f6fb"></div><div class="a" style="left:860px;top:56px;width:2px;height:17px;border-left:1px solid #7d7b9c;border-right:1px solid #f6f6fb"></div>
<svg class="a" style="left:933px;top:56px" width="16" height="16" viewBox="0 0 16 16"><rect x="0" y="0" width="16" height="16" fill="#fff"/><rect x="2" y="2" width="11" height="5" fill="#555"/><path d="M2 1.500h11M2 7.500h11" stroke="#000" stroke-dasharray="1 1"/><path d="M5 4.500h4" stroke="#f00" stroke-width="1.500"/><path d="M3 11h3l4 3h4" fill="none" stroke="#000"/><circle cx="4" cy="11" r="1" fill="#fff" stroke="#000" stroke-width=".7"/><circle cx="12" cy="14" r="1" fill="#fff" stroke="#000" stroke-width=".7"/></svg>
<svg class="a" style="left:953px;top:56px" width="16" height="16" viewBox="0 0 16 16"><rect width="16" height="16" fill="#c0c0c0"/><path d="M3 2l10 6-10 6z" fill="#f00"/></svg>
<svg class="a" style="left:972px;top:56px" width="16" height="16" viewBox="0 0 16 16"><rect width="16" height="16" fill="#c0c0c0"/><path d="M8 2l6 12H2z" fill="#0a8a0a"/><rect x="7.200" y="6" width="1.600" height="4.500" fill="#fff"/><rect x="7.200" y="11.500" width="1.600" height="1.500" fill="#fff"/></svg>
<svg class="a" style="left:994px;top:56px" width="16" height="16" viewBox="0 0 16 16"><rect width="16" height="16" fill="#c0c0c0"/><circle cx="8" cy="8" r="6" fill="#0a8a0a"/><rect x="7.200" y="4" width="1.600" height="5.500" fill="#fff"/><rect x="7.200" y="10.500" width="1.600" height="1.600" fill="#fff"/></svg>
<svg class="a" style="left:1400px;top:56px" width="16" height="16" viewBox="0 0 16 16"><rect width="16" height="16" fill="#fff"/><rect x="1" y="6" width="6" height="5" fill="#0000c0"/><path d="M8 11h6V8l-2-3h-1v3H8z" fill="#fff" stroke="#000" stroke-width=".9"/></svg>
<div class="a" style="left:950px;top:56px;width:2px;height:17px;border-left:1px solid #7d7b9c;border-right:1px solid #f6f6fb"></div><div class="a" style="left:1016px;top:56px;width:2px;height:17px;border-left:1px solid #7d7b9c;border-right:1px solid #f6f6fb"></div><div class="a" style="left:1053px;top:56px;width:2px;height:17px;border-left:1px solid #7d7b9c;border-right:1px solid #f6f6fb"></div><div class="a" style="left:1394px;top:56px;width:2px;height:17px;border-left:1px solid #7d7b9c;border-right:1px solid #f6f6fb"></div>
<div class="a" style="left:1057px;top:54px;width:141px;height:20px;background:#f0f0f0"></div>
<div class="t" style="left:1057px;top:56px;width:141px;text-align:center;font-size:12.500px">100.000ms</div>
<div class="a" style="left:1198px;top:53px;width:193px;height:22px;background:#fff"></div>
<div class="t" style="left:1200px;top:56px;font-size:12px">局部软元件未执行</div>
<div class="a" style="left:1378px;top:54px;width:12px;height:20px;background:linear-gradient(180deg,#e6e6f0,#b9b8d0);border:1px solid #f4f4fa"></div>
<svg class="a" style="left:1380px;top:62px" width="8" height="5"><path d="M0 .5h8l-4 4.500z" fill="#000"/></svg>
<div class="tb" style="left:3px;top:79px;width:718px;height:27px;"><div class="grip"></div><div class="tbo"><svg class="ov" viewBox="0 0 7 8"><path d="M1 1.500h6" stroke="#fff"/><path d="M0 .5h6" stroke="#000"/><path d="M1 4h6l-3 3.500z" fill="#fff"/><path d="M0 3h6l-3 3.500z" fill="#000"/></svg></div></div>
<div class="tb" style="left:725px;top:79px;width:768px;height:27px;"><div class="grip"></div><div class="tbo"><svg class="ov" viewBox="0 0 7 8"><path d="M1 1.500h6" stroke="#fff"/><path d="M0 .5h6" stroke="#000"/><path d="M1 4h6l-3 3.500z" fill="#fff"/><path d="M0 3h6l-3 3.500z" fill="#000"/></svg></div></div>
<div class="a" style="left:10px;top:81px;width:22px;height:22px;border:1px solid #8b6b48;background:linear-gradient(180deg,#fbd09a 0,#fdb657 45%,#fdbd66 70%,#fcd092 100%)"></div>
<svg class="a" style="left:13px;top:85px" width="16" height="16" viewBox="0 0 16 16"><rect x="3" y="2" width="12" height="13" fill="#f4f4f4"/><path d="M3.500 5v8.500h6M3.500 8.500h6" fill="none" stroke="#888"/><rect x="0" y="1" width="6" height="5" fill="#f0a818" stroke="#b87808" stroke-width=".6"/><rect x="9" y="6" width="6" height="5" fill="#f0a818" stroke="#b87808" stroke-width=".6"/><rect x="9" y="11" width="6" height="4.500" fill="#f0a818" stroke="#b87808" stroke-width=".6"/></svg>
<svg class="a" style="left:41px;top:85px" width="16" height="16" viewBox="0 0 16 16"><rect x="3.500" y="3.500" width="9" height="10" rx="1" fill="#909090" stroke="#000" stroke-width="1.500"/><path d="M0 5.500h3M0 8.500h3M0 11.500h3M13 5.500h3M13 8.500h3M13 11.500h3" stroke="#000" stroke-width="1.500"/></svg>
<svg class="a" style="left:69px;top:85px" width="16" height="16" viewBox="0 0 16 16"><rect x=".5" y="1.500" width="15" height="13" fill="#fff" stroke="#224"/><rect x="1" y="2" width="14" height="3" fill="#1a4fd0"/><path d="M2 7.500h12M2 10h12M2 12.500h12" stroke="#1a4fd0" stroke-width=".9"/></svg>
<svg class="a" style="left:97px;top:85px" width="16" height="16" viewBox="0 0 16 16"><rect x="0" y="0" width="16" height="7.500" fill="#1a74e6"/><text x="1" y="6.500" font-family="Liberation Mono,monospace" font-weight="bold" font-size="8" fill="#fff" textLength="14" lengthAdjust="spacingAndGlyphs">Dev</text><rect x="0" y="9" width="7" height="4.500" fill="#1a74e6"/><path d="M4.500 9.500l3 1.800-3 1.800z" fill="#fff"/><path d="M8.500 7.500h2v1.500h1.500V7.500h2v1.500l1.500 1.500V15.500h-3v-3.500h-2v3.500H7.500v-5L8.500 9z" fill="#181818"/></svg>
<svg class="a" style="left:119px;top:85px" width="16" height="16" viewBox="0 0 16 16"><rect x="0" y="0" width="16" height="7.500" fill="#1a74e6"/><text x="1" y="6.500" font-family="Liberation Mono,monospace" font-weight="bold" font-size="8" fill="#fff" textLength="14" lengthAdjust="spacingAndGlyphs">Dev</text><rect x="6.500" y="10.500" width="9" height="5" fill="#fff" stroke="#444"/><path d="M6.500 13h9M9.500 10.500v5M12.500 10.500v5" stroke="#444"/></svg>
<svg class="a" style="left:141px;top:85px" width="16" height="16" viewBox="0 0 16 16"><rect x="0" y="0" width="16" height="7.500" fill="#1a74e6"/><text x="1" y="6.500" font-family="Liberation Mono,monospace" font-weight="bold" font-size="8" fill="#fff" textLength="14" lengthAdjust="spacingAndGlyphs">Dev</text><path d="M0 9.500h16M4 9.500v2M12 9.500v2" stroke="#222"/><rect x="1" y="11.500" width="6" height="4" fill="#484848"/><rect x="9" y="11.500" width="6" height="4" fill="#484848"/></svg>
<svg class="a" style="left:169px;top:85px" width="16" height="16" viewBox="0 0 16 16"><rect x="0" y="0" width="16" height="7.500" fill="#1a74e6"/><text x="1" y="6.500" font-family="Liberation Mono,monospace" font-weight="bold" font-size="8" fill="#fff" textLength="14" lengthAdjust="spacingAndGlyphs">Dev</text><ellipse cx="9" cy="12" rx="5" ry="3" fill="#fff" stroke="#222"/><circle cx="9" cy="12" r="2.200" fill="#5a1808"/></svg>
<svg class="a" style="left:197px;top:85px" width="16" height="16" viewBox="0 0 16 16"><ellipse cx="4" cy="3" rx="3.500" ry="1.500" fill="none" stroke="#444" stroke-width=".8"/><path d="M4 0v6M0 3h8" stroke="#444" stroke-width=".8"/><rect x="2.500" y="6" width="3" height="9.500" fill="#555"/><rect x="2.500" y="6" width="3" height="2" fill="#999"/><circle cx="10" cy="9.500" r="2.800" fill="#fff" stroke="#222" stroke-width="1.200"/><path d="M12 12l3 3.500" stroke="#b05020" stroke-width="1.800"/></svg>
<svg class="a" style="left:233px;top:85px" width="16" height="16" viewBox="0 0 16 16"><ellipse cx="8" cy="7.500" rx="7.500" ry="6.500" fill="#d8ecf8" stroke="#7090a8"/><path d="M4 13l-1 3 4-2.500z" fill="#d8ecf8" stroke="#7090a8" stroke-width=".7"/><text x="8.500" y="12" text-anchor="middle" font-family="Liberation Serif,serif" font-weight="bold" font-size="12" fill="#1828c0">?</text></svg>
<svg class="a" style="left:261px;top:85px" width="16" height="16" viewBox="0 0 16 16"><path d="M2 1h3v3h1v-2h4v2h1V1h3v3l2 6v6h-6v-5H6v5H0v-6l2-6z" fill="#222"/><path d="M1.500 10.500v4M11.500 10.500v4" stroke="#777" stroke-width="1.200"/></svg>
<svg class="a" style="left:692px;top:85px" width="16" height="16" viewBox="0 0 16 16"><path d="M1.500 1.500h8l3 3v10h-11z" fill="#eeeef5" stroke="#9b99b9"/><circle cx="10" cy="6" r="3" fill="#e3e2ee" stroke="#9b99b9"/><path d="M12 8.500l2 2" stroke="#9b99b9" stroke-width="1.500"/></svg>
<div class="a" style="left:35px;top:84px;width:2px;height:17px;border-left:1px solid #7d7b9c;border-right:1px solid #f6f6fb"></div><div class="a" style="left:62px;top:84px;width:2px;height:17px;border-left:1px solid #7d7b9c;border-right:1px solid #f6f6fb"></div><div class="a" style="left:90px;top:84px;width:2px;height:17px;border-left:1px solid #7d7b9c;border-right:1px solid #f6f6fb"></div><div class="a" style="left:162px;top:84px;width:2px;height:17px;border-left:1px solid #7d7b9c;border-right:1px solid #f6f6fb"></div><div class="a" style="left:226px;top:84px;width:2px;height:17px;border-left:1px solid #7d7b9c;border-right:1px solid #f6f6fb"></div><div class="a" style="left:254px;top:84px;width:2px;height:17px;border-left:1px solid #7d7b9c;border-right:1px solid #f6f6fb"></div><div class="a" style="left:282px;top:84px;width:2px;height:17px;border-left:1px solid #7d7b9c;border-right:1px solid #f6f6fb"></div>
<svg class="a" style="left:187px;top:90px" width="5" height="3"><path d="M0 0h5l-2.500 3z" fill="#000"/></svg>
<svg class="a" style="left:216px;top:90px" width="5" height="3"><path d="M0 0h5l-2.500 3z" fill="#000"/></svg>
<div class="a" style="left:288px;top:81px;width:198px;height:23px;background:#e1e0e8;border:1px solid #b9b8cf"></div>
<svg class="a" style="left:472px;top:90px" width="7" height="4"><path d="M0 0h7l-3.500 4z" fill="#a3a1bf"/></svg>
<div class="a" style="left:488px;top:81px;width:198px;height:23px;background:#e1e0e8;border:1px solid #b9b8cf"></div>
<svg class="a" style="left:672px;top:90px" width="7" height="4"><path d="M0 0h7l-3.500 4z" fill="#a3a1bf"/></svg>
<div class="a" style="left:732px;top:81px;width:22px;height:22px;border:1px solid #8b6b48;background:linear-gradient(180deg,#fbd09a 0,#fdb657 45%,#fdbd66 70%,#fcd092 100%)"></div>
<svg class="a" style="left:735px;top:85px" width="16" height="16" viewBox="0 0 16 16"><path d="M3.500 .5v13l3-3 2.200 5 2-.9-2.200-4.800h4.200z" fill="#fff" stroke="#000"/></svg>
<svg class="a" style="left:757px;top:85px" width="16" height="16" viewBox="0 0 16 16"><path d="M1 5v7h5" fill="none" stroke="#9b99b9" stroke-width="2"/><path d="M6 11l6-7.500 3.500 2.800-6 7.500z" fill="#d2d1e2" stroke="#9b99b9" stroke-width="1.200"/></svg>
<svg class="a" style="left:779px;top:85px" width="16" height="16" viewBox="0 0 16 16"><path d="M0 6h3M13 6h3" stroke="#9b99b9" stroke-width="1.600"/><path d="M3 2.500v11h10v-11" fill="none" stroke="#9b99b9" stroke-width="1.400"/><path d="M5 1v4M11 1v4M5 9h2M9 9h1" stroke="#9b99b9" stroke-width="1.600"/><circle cx="10.500" cy="10" r="1.800" fill="none" stroke="#9b99b9"/></svg>
<svg class="a" style="left:801px;top:85px" width="16" height="16" viewBox="0 0 16 16"><rect x=".5" y="1.500" width="15" height="3" fill="#dddce9" stroke="#9b99b9" stroke-width="1.200"/><path d="M1 7.500h8v7H1" fill="none" stroke="#9b99b9" stroke-width="1.600"/><rect x="10" y="6.500" width="3.500" height="7" fill="#dddce9" stroke="#9b99b9" stroke-width="1.200"/><path d="M1 11h5" stroke="#9b99b9" stroke-width="1.400"/></svg>
<div class="a" style="left:820px;top:81px;width:22px;height:22px;background:#fdba5f;border:1px solid #d9a05a"></div>
<svg class="a" style="left:823px;top:85px" width="16" height="16" viewBox="0 0 16 16"><path d="M0 4h2M5 4h2M2 1.500v5M5 1.500v5" stroke="#8a88ae" stroke-width="1.200" fill="none"/><path d="M7 4h2v8h2" stroke="#8a88ae" stroke-width="1.200" fill="none"/><path d="M12 9.500l-1.500 2.500 1.500 2.500M14 9.500l1.500 2.500-1.500 2.500" stroke="#8a88ae" stroke-width="1" fill="none"/></svg>
<svg class="a" style="left:845px;top:85px" width="16" height="16" viewBox="0 0 16 16"><rect x=".5" y="1" width="9" height="3.500" fill="#dddce9" stroke="#9b99b9" stroke-width="1.200"/><rect x=".5" y="11" width="9" height="3.500" fill="#dddce9" stroke="#9b99b9" stroke-width="1.200"/><path d="M3 8h8" stroke="#9b99b9" stroke-width="1.800"/><path d="M6 5.500L3 8l3 2.500" fill="none" stroke="#9b99b9" stroke-width="1.400"/><rect x="11" y="7" width="5" height="2.200" fill="#dddce9" stroke="#9b99b9" stroke-width=".8"/></svg>
<svg class="a" style="left:867px;top:85px" width="16" height="16" viewBox="0 0 16 16"><rect x="1" y="5" width="4" height="10.500" fill="#dddce9" stroke="#9b99b9" stroke-width="1.200"/><rect x="11" y="5" width="4" height="10.500" fill="#dddce9" stroke="#9b99b9" stroke-width="1.200"/><path d="M8 3v8" stroke="#9b99b9" stroke-width="1.800"/><path d="M5.500 8L8 11l2.500-3" fill="none" stroke="#9b99b9" stroke-width="1.400"/><rect x="6.800" y="0" width="2.400" height="3.500" fill="#9b99b9"/></svg>
<svg class="a" style="left:889px;top:85px" width="16" height="16" viewBox="0 0 16 16"><rect x="4" y="1" width="8" height="3" fill="#dddce9" stroke="#9b99b9" stroke-width="1.200"/><rect x="2" y="11" width="9" height="3.500" fill="#c9c8dc" stroke="#9b99b9" stroke-width="1.200"/><path d="M4 8h6" stroke="#9b99b9" stroke-width="1.800"/><path d="M7 5.500L4 8l3 2.500" fill="none" stroke="#9b99b9" stroke-width="1.400"/><rect x="10" y="6.500" width="6" height="2.200" fill="#dddce9" stroke="#9b99b9" stroke-width=".8"/></svg>
<svg class="a" style="left:911px;top:85px" width="16" height="16" viewBox="0 0 16 16"><rect x="2" y="1" width="9" height="4.500" fill="#c9c8dc" stroke="#9b99b9" stroke-width="1.200"/><path d="M4 9.500h6" stroke="#9b99b9" stroke-width="1.800"/><path d="M7 7L4 9.500l3 2.500" fill="none" stroke="#9b99b9" stroke-width="1.400"/><rect x="10" y="8.500" width="6" height="2.200" fill="#dddce9" stroke="#9b99b9" stroke-width=".8"/><rect x="2" y="13" width="8" height="2" fill="#dddce9" stroke="#9b99b9" stroke-width=".8"/></svg>
<svg class="a" style="left:933px;top:85px" width="16" height="16" viewBox="0 0 16 16"><rect x="1" y="2" width="14" height="9.500" fill="#c9c8dc" stroke="#9b99b9" stroke-width="1.600"/><path d="M3.500 4.500l3 2-3 2M7 9h4" fill="none" stroke="#f0f0f6" stroke-width="1.200"/><path d="M8 13l5-5.500 3 2.500-5 5.500z" fill="#d2d1e2" stroke="#9b99b9" stroke-width="1"/></svg>
<div class="a" style="left:952px;top:81px;width:22px;height:22px;background:#fcc580;border:1px solid #eaa95a"></div>
<svg class="a" style="left:955px;top:85px" width="16" height="16" viewBox="0 0 16 16"><rect x=".5" y="2.500" width="15" height="9" fill="#f2f0f0" stroke="#e0b078"/><path d="M4.500 2v10" stroke="#e8a040" stroke-width="1.400"/><path d="M7 9l5-5.500 3 2.500-5 5.500z" fill="#e4e2e8" stroke="#a8a4b8" stroke-width=".9"/><path d="M0 14.500h15" stroke="#b8b4c8"/></svg>
<svg class="a" style="left:977px;top:85px" width="16" height="16" viewBox="0 0 16 16"><path d="M0 6h4M11 6h5M4 1v10M11 1v10" stroke="#6c6b93" stroke-width="2" fill="none"/><text x="6" y="15.8" font-family="Liberation Sans,sans-serif" font-size="7" fill="#7d7ba0">1</text></svg>
<svg class="a" style="left:999px;top:85px" width="16" height="16" viewBox="0 0 16 16"><path d="M0 6h4M11 6h5M4 1v10M11 1v10M3 12l9-11" stroke="#6c6b93" stroke-width="2" fill="none"/><text x="6" y="15.8" font-family="Liberation Sans,sans-serif" font-size="7" fill="#7d7ba0">2</text></svg>
<svg class="a" style="left:1021px;top:85px" width="16" height="16" viewBox="0 0 16 16"><path d="M1 1v5h4M5 1v8M14 1v10" stroke="#6c6b93" stroke-width="2" fill="none"/><text x="8" y="15.8" font-family="Liberation Sans,sans-serif" font-size="7" fill="#7d7ba0">3</text></svg>
<svg class="a" style="left:1043px;top:85px" width="16" height="16" viewBox="0 0 16 16"><path d="M1 1v5h4M5 1v8M14 1v10M7 12l7-11" stroke="#6c6b93" stroke-width="2" fill="none"/><text x="8" y="15.8" font-family="Liberation Sans,sans-serif" font-size="7" fill="#7d7ba0">4</text></svg>
<svg class="a" style="left:1065px;top:85px" width="16" height="16" viewBox="0 0 16 16"><path d="M8.500 1v14" stroke="#6c6b93" stroke-width="2" fill="none"/><text x="2" y="15.8" font-family="Liberation Sans,sans-serif" font-size="7" fill="#7d7ba0">5</text></svg>
<svg class="a" style="left:1087px;top:85px" width="16" height="16" viewBox="0 0 16 16"><path d="M0 5h16" stroke="#6c6b93" stroke-width="2" fill="none"/><text x="6" y="15.8" font-family="Liberation Sans,sans-serif" font-size="7" fill="#7d7ba0">6</text></svg>
<svg class="a" style="left:1109px;top:85px" width="16" height="16" viewBox="0 0 16 16"><path d="M0 6h3M13 6h3" stroke="#6c6b93" stroke-width="1.600" fill="none"/><path d="M6 1c-4 2-4 8 0 10M10 1c4 2 4 8 0 10" stroke="#6c6b93" stroke-width="2" fill="none"/><text x="6" y="15.8" font-family="Liberation Sans,sans-serif" font-size="7" fill="#7d7ba0">7</text></svg>
<svg class="a" style="left:1131px;top:85px" width="16" height="16" viewBox="0 0 16 16"><rect x="4" y="1.500" width="9" height="9" fill="#cfcee0" stroke="#6c6b93" stroke-width="1.200"/><path d="M0 3.500h4M0 6h4M0 8.500h4M13 3.500h3M13 6h3M13 8.500h3" stroke="#6c6b93" stroke-width="1.200"/><text x="6" y="15.8" font-family="Liberation Sans,sans-serif" font-size="7" fill="#7d7ba0">8</text></svg>
<svg class="a" style="left:1153px;top:85px" width="16" height="16" viewBox="0 0 16 16"><text x="0" y="8" font-family="Liberation Mono,monospace" font-size="7" font-weight="bold" fill="#6c6b93" textLength="16" lengthAdjust="spacingAndGlyphs">VAR=</text><text x="6" y="15.8" font-family="Liberation Sans,sans-serif" font-size="7" fill="#7d7ba0">9</text></svg>
<svg class="a" style="left:1175px;top:85px" width="16" height="16" viewBox="0 0 16 16"><text x="0" y="8" font-family="Liberation Mono,monospace" font-size="7" font-weight="bold" fill="#6c6b93" textLength="16" lengthAdjust="spacingAndGlyphs">=VAR</text><text x="6" y="15.8" font-family="Liberation Sans,sans-serif" font-size="7" fill="#7d7ba0">0</text></svg>
<svg class="a" style="left:1197px;top:85px" width="16" height="16" viewBox="0 0 16 16"><path d="M0 6h3M13 6h3M3 1v10M13 1v10M8 10V2M6 4l2-2 2 2" stroke="#6c6b93" stroke-width="1.500" fill="none"/></svg>
<svg class="a" style="left:1219px;top:85px" width="16" height="16" viewBox="0 0 16 16"><path d="M0 6h3M13 6h3M3 1v10M13 1v10M8 2v8M6 8l2 2 2-2" stroke="#6c6b93" stroke-width="1.500" fill="none"/></svg>
<svg class="a" style="left:1241px;top:85px" width="16" height="16" viewBox="0 0 16 16"><path d="M0 6h3M13 6h3M3 1v10M13 1v10M8 10V2M6 4l2-2 2 2M3 11L13 1" stroke="#6c6b93" stroke-width="1.400" fill="none"/></svg>
<svg class="a" style="left:1263px;top:85px" width="16" height="16" viewBox="0 0 16 16"><path d="M0 6h3M13 6h3M3 1v10M13 1v10M8 2v8M6 8l2 2 2-2M3 11L13 1" stroke="#6c6b93" stroke-width="1.400" fill="none"/></svg>
<svg class="a" style="left:1285px;top:85px" width="16" height="16" viewBox="0 0 16 16"><path d="M0 8h9M6 5l3 3-3 3M10 5l3 3-3 3" stroke="#6c6b93" stroke-width="1.500" fill="none"/></svg>
<svg class="a" style="left:1307px;top:85px" width="16" height="16" viewBox="0 0 16 16"><path d="M0 8h2M14 8h2M5 5L2 8l3 3M11 5l3 3-3 3" stroke="#6c6b93" stroke-width="1.300" fill="none"/><text x="5.500" y="10.500" font-family="Liberation Sans,sans-serif" font-size="6" font-weight="bold" fill="#6c6b93">R</text></svg>
<svg class="a" style="left:1329px;top:85px" width="16" height="16" viewBox="0 0 16 16"><path d="M3 1l-2 3 2 3M10 1l2 3-2 3M2 4h2M9 4h2" stroke="#9b99b9" fill="none"/><path d="M2 11c3-3 6 1 9-2M2 14c3-3 6 1 9-2" stroke="#9b99b9" fill="none"/><path d="M8 12l5-5 2 2-5 5z" fill="#c6c5da" stroke="#9b99b9" stroke-width=".8"/></svg>
<svg class="a" style="left:1351px;top:85px" width="16" height="16" viewBox="0 0 16 16"><path d="M2 1h8c2 0 2 4 0 4H6l-2 2V5H2z" fill="#d5d4e4" stroke="#9b99b9" stroke-width=".8"/><rect x="1" y="9.500" width="13" height="2" fill="#d5d4e4" stroke="#9b99b9" stroke-width=".7"/><rect x="1" y="12.500" width="13" height="2" fill="#d5d4e4" stroke="#9b99b9" stroke-width=".7"/><path d="M9 8l5-5 2 2-5 5z" fill="#c6c5da" stroke="#9b99b9" stroke-width=".8"/></svg>
<svg class="a" style="left:1373px;top:85px" width="16" height="16" viewBox="0 0 16 16"><path d="M1 2h9l-3 4H1z" fill="#9b99b9"/><path d="M6 12l5-6 3 2.500-5 6z" fill="#c6c5da" stroke="#9b99b9" stroke-width=".8"/></svg>
<svg class="a" style="left:1395px;top:85px" width="16" height="16" viewBox="0 0 16 16"><path d="M4 1v6M1 4h6" stroke="#9b99b9" stroke-width="2"/><path d="M7 6.500h7M9 9.500h5v5" stroke="#9b99b9" stroke-width="1.400" fill="none"/><rect x="11" y="8" width="3" height="7" fill="#9b99b9"/></svg>
<svg class="a" style="left:1417px;top:85px" width="16" height="16" viewBox="0 0 16 16"><path d="M1 3h6" stroke="#9b99b9" stroke-width="2"/><path d="M7 6.500h7M9 9.500h5v5" stroke="#9b99b9" stroke-width="1.400" fill="none"/><rect x="11" y="8" width="3" height="7" fill="#9b99b9"/></svg>
<svg class="a" style="left:1439px;top:85px" width="16" height="16" viewBox="0 0 16 16"><circle cx="7" cy="7" r="5.500" fill="#fff" stroke="#222" stroke-width="1.600"/><path d="M4 7h6M7 4v6" stroke="#000" stroke-width="1.600"/><path d="M11 11l4 4" stroke="#a0623a" stroke-width="2"/></svg>
<svg class="a" style="left:1461px;top:85px" width="16" height="16" viewBox="0 0 16 16"><circle cx="7" cy="7" r="5.500" fill="#fff" stroke="#222" stroke-width="1.600"/><path d="M4 7h6" stroke="#000" stroke-width="1.600"/><path d="M11 11l4 4" stroke="#a0623a" stroke-width="2"/></svg>
<div class="a" style="left:458px;top:108px;width:1462px;height:23px;background:linear-gradient(180deg,#efeff4 0,#f6f6f9 50%,#fdfdfe 100%)"></div>
<svg width="0" height="0" class="a"><defs><linearGradient id="tga" x1="0" y1="0" x2="0" y2="1"><stop offset="0" stop-color="#fff6e8"/><stop offset=".4" stop-color="#fee0b6"/><stop offset="1" stop-color="#fdc273"/></linearGradient><linearGradient id="tgi" x1="0" y1="0" x2="0" y2="1"><stop offset="0" stop-color="#fbfbfd"/><stop offset=".5" stop-color="#ededf3"/><stop offset="1" stop-color="#dcdce8"/></linearGradient></defs></svg>
<svg class="a" style="left:1245px;top:109px" width="240" height="22" viewBox="0 0 240 22"><path d="M0.500 22 L20.500 3 Q22 .5 26 .5 L235.5 .5 Q239.5 .5 239.5 4.500 L239.5 22" fill="url(#tgi)" stroke="#1c4aaa" stroke-width="1.200"/></svg>
<svg class="a" style="left:1025px;top:109px" width="239" height="22" viewBox="0 0 239 22"><path d="M0.500 22 L20.500 3 Q22 .5 26 .5 L234.5 .5 Q238.5 .5 238.5 4.500 L238.5 22" fill="url(#tgi)" stroke="#1c4aaa" stroke-width="1.200"/></svg>
<svg class="a" style="left:879px;top:109px" width="165" height="22" viewBox="0 0 165 22"><path d="M0.500 22 L20.500 3 Q22 .5 26 .5 L160.5 .5 Q164.5 .5 164.5 4.500 L164.5 22" fill="url(#tgi)" stroke="#1c4aaa" stroke-width="1.200"/></svg>
<svg class="a" style="left:462px;top:109px" width="217" height="22" viewBox="0 0 217 22"><path d="M0.500 22 L20.500 3 Q22 .5 26 .5 L212.5 .5 Q216.5 .5 216.5 4.500 L216.5 22" fill="url(#tgi)" stroke="#1c4aaa" stroke-width="1.200"/></svg>
<svg class="a" style="left:658px;top:109px" width="240" height="23" viewBox="0 0 240 23"><path d="M0.500 23 L20.500 3 Q22 .5 26 .5 L235.5 .5 Q239.5 .5 239.5 4.500 L239.5 23" fill="url(#tga)" stroke="#1c4aaa" stroke-width="1.200"/></svg>
<div class="tt" style="left:508px">局部标签设置 POU_01 [PRG]</div>
<div class="tt" style="left:705px;font-weight:bold;letter-spacing:.15px">POU_01 [PRG] 程序本体 [...</div>
<div class="tt" style="left:925px;letter-spacing:.3px">软元件存储器MAIN</div>
<div class="tt" style="left:1071px">函数/FB标签设置 FunTest [FUN:...</div>
<div class="tt" style="left:1291px;letter-spacing:.15px">FunTest [FUN: st_test] 程序本...</div>
<svg class="a" style="left:489px;top:113px" width="16" height="16" viewBox="0 0 16 16"><rect x="0" y="1" width="9" height="10" fill="#a8d0f0" opacity=".8" transform="rotate(-8 4 6)"/><rect x="4.500" y="6.500" width="10" height="8" fill="#fff" stroke="#4848e0"/><path d="M4.500 9.500h10M4.500 12h10M8 6.500v8" stroke="#4848e0"/></svg>
<svg class="a" style="left:1051px;top:113px" width="16" height="16" viewBox="0 0 16 16"><rect x="0" y="1" width="9" height="10" fill="#a8d0f0" opacity=".8" transform="rotate(-8 4 6)"/><rect x="4.500" y="6.500" width="10" height="8" fill="#fff" stroke="#4848e0"/><path d="M4.500 9.500h10M4.500 12h10M8 6.500v8" stroke="#4848e0"/></svg>
<svg class="a" style="left:687px;top:113px" width="16" height="16" viewBox="0 0 16 16"><path d="M1.500 .5h8l3 3v12h-11z" fill="#f4f6fc" stroke="#8890a8"/><path d="M4 2v5.500M6.500 2v5.500" stroke="#1a3ad0" stroke-width="1.400"/><path d="M2.500 4.700h1.500M6.500 4.700h2" stroke="#1a3ad0" stroke-width="1.200"/><path d="M6 8v5.500M8.500 8v5.500" stroke="#d01030" stroke-width="1.400"/><path d="M4 10.700h2M8.500 10.700h2" stroke="#d01030" stroke-width="1.200"/></svg>
<svg class="a" style="left:906px;top:113px" width="16" height="16" viewBox="0 0 16 16"><rect x="3" y="2" width="12" height="11" fill="#fff" stroke="#222"/><rect x="3" y="1" width="12" height="4" fill="#222"/><path d="M3 8h12M3 10.500h12M8 5v8M11.500 5v8" stroke="#999" stroke-width=".7"/><circle cx="4" cy="12" r="3.500" fill="#3a78e0"/><path d="M4 12l3-2v3z" fill="#e02020"/><path d="M1 13.500l3 1.500 2-1.500" fill="#30b030"/></svg>
<svg class="a" style="left:1272px;top:113px" width="16" height="16" viewBox="0 0 16 16"><path d="M1.500 .5h9l3 3v12h-12z" fill="#f4f4f4" stroke="#777"/><text x="2" y="13" font-family="Liberation Sans,sans-serif" font-weight="bold" font-size="8" fill="#222" textLength="10" lengthAdjust="spacingAndGlyphs">ST</text></svg>
<div class="a" style="left:878px;top:113px;width:15px;height:15px;background:#fdf6e8;border:1px solid #c8b898"></div>
<svg class="a" style="left:881px;top:116px" width="9" height="9"><path d="M1 1l7 7M8 1l-7 7" stroke="#8a8270" stroke-width="2"/></svg>
<svg class="a" style="left:1873px;top:113px" width="44" height="12" viewBox="0 0 44 12"><path d="M6.500 .5v9l-4.500-4.500z" fill="none" stroke="#000"/><path d="M17.500 .5v9l4.500-4.500z" fill="none" stroke="#000"/><path d="M32 5h9l-4.500 4.500z" fill="#000"/></svg>
<div class="a" style="left:454px;top:108px;width:4px;height:911px;background:#dcdce8"></div>
<div class="a" style="left:0px;top:107px;width:454px;height:912px;background:#a9a8c6"></div>
<div class="a" style="left:0px;top:107px;width:454px;height:25px;background:linear-gradient(180deg,#f4f4f9 0,#e6e6f0 35%,#c9c8dc 75%,#b0afca 100%);border-radius:3px 3px 0 0"></div>
<div class="a" style="left:6px;top:112px;width:2px;height:18px;background:repeating-linear-gradient(180deg,#fff 0,#fff 2px,transparent 2px,transparent 4px)"></div>
<div class="a" style="left:5px;top:111px;width:2px;height:18px;background:repeating-linear-gradient(180deg,#63617f 0,#63617f 2px,transparent 2px,transparent 4px)"></div>
<div class="t" style="left:14px;top:112px;font-size:12px">导航</div>
<svg class="a" style="left:422px;top:114px" width="26" height="10" viewBox="0 0 26 10"><path d="M2.500 0v5M1 5h6M4 5v5M2 .5h4M5.500 0v5" stroke="#000" stroke-width="1.200" fill="none"/><path d="M16 1l7 7M23 1l-7 7" stroke="#000" stroke-width="1.600"/></svg>
<div class="a" style="left:1px;top:134px;width:453px;height:23px;background:linear-gradient(180deg,#a8a7c4 0,#9a99b9 40%,#76749a 100%);border-top:1px solid #c4c3d8"></div>
<div class="t" style="left:5px;top:138px;color:#fff;font-weight:bold;font-size:10.500px">工程</div>
<div class="a" style="left:4px;top:158px;width:449px;height:25px;background:linear-gradient(180deg,#f3f3f9 0,#e3e3ee 35%,#c5c4da 75%,#a9a8c5 100%);border-radius:3px"></div>
<svg class="a" style="left:6px;top:163px" width="16" height="16" viewBox="0 0 16 16"><path d="M1.500 3.500h8v11h-8z" fill="#fff" stroke="#555"/><path d="M12 0v7M8.500 3.500h7" stroke="#f08000" stroke-width="2.200"/></svg>
<svg class="a" style="left:28px;top:163px" width="16" height="16" viewBox="0 0 16 16"><path d="M1.500 2.500h6l2 2v6h-8z" fill="#dddce8" stroke="#a9a7c4"/><path d="M5.500 6.500h6l2 2v6h-8z" fill="#e8e7f0" stroke="#a9a7c4"/></svg>
<svg class="a" style="left:50px;top:163px" width="16" height="16" viewBox="0 0 16 16"><rect x="1.500" y="3.500" width="10" height="11" fill="#cfcee0" stroke="#a9a7c4"/><rect x="4" y="2" width="5" height="3" fill="#a9a7c4"/><path d="M7.500 8.500h5l2 2v4h-7z" fill="#e8e7f0" stroke="#a9a7c4"/></svg>
<svg class="a" style="left:72px;top:163px" width="16" height="16" viewBox="0 0 16 16"><path d="M1.500 .5h5l2 2v7h-7z" fill="#fff" stroke="#555"/><path d="M3 4h4M3 6h4" stroke="#555" stroke-width=".8"/><circle cx="11" cy="10.500" r="4.500" fill="#1a58d0"/><rect x="10.300" y="9.500" width="1.400" height="4" fill="#fff"/><rect x="10.300" y="7.500" width="1.400" height="1.300" fill="#fff"/></svg>
<svg class="a" style="left:94px;top:163px" width="16" height="16" viewBox="0 0 16 16"><path d="M2.500 1.500h8l3 3v10h-11z" fill="#fff" stroke="#555"/><path d="M5 8a3 3 0 0 1 5.500-1.500M11 10a3 3 0 0 1-5.500 1.500" stroke="#18a018" stroke-width="1.600" fill="none"/><path d="M11.500 4.500v3h-3zM4.500 13.500v-3h3z" fill="#18a018"/></svg>
<div class="a" style="left:115px;top:163px;width:1px;height:16px;background:#555"></div>
<div class="a" style="left:116px;top:164px;width:1px;height:16px;background:#fff"></div>
<svg class="a" style="left:122px;top:162px" width="16" height="16" viewBox="0 0 16 16"><path d="M0 8l6-7v14z" fill="#777"/><rect x="5" y="2" width="4" height="13" fill="#e02828"/><rect x="9" y="3" width="6" height="12" fill="#333"/><path d="M10.500 5v8M12.500 5v8" stroke="#aaa" stroke-width=".7"/></svg>
<svg class="a" style="left:140px;top:171px" width="5" height="3"><path d="M0 0h5l-2.500 3z" fill="#000"/></svg>
<div class="a" style="left:1px;top:184px;width:452px;height:700px;background:#fff"></div>
<div class="a" style="left:95px;top:524px;width:53px;height:20px;background:#efefef"></div>
<div class="a" style="left:9px;top:199px;width:1px;height:556px;background:repeating-linear-gradient(180deg,#808080 0,#808080 1px,transparent 1px,transparent 2px)"></div>
<div class="a" style="left:28px;top:202px;width:1px;height:53px;background:repeating-linear-gradient(180deg,#808080 0,#808080 1px,transparent 1px,transparent 2px)"></div>
<div class="a" style="left:28px;top:322px;width:1px;height:13px;background:repeating-linear-gradient(180deg,#808080 0,#808080 1px,transparent 1px,transparent 2px)"></div>
<div class="a" style="left:28px;top:362px;width:1px;height:93px;background:repeating-linear-gradient(180deg,#808080 0,#808080 1px,transparent 1px,transparent 2px)"></div>
<div class="a" style="left:28px;top:482px;width:1px;height:213px;background:repeating-linear-gradient(180deg,#808080 0,#808080 1px,transparent 1px,transparent 2px)"></div>
<div class="a" style="left:47px;top:502px;width:1px;height:8px;background:repeating-linear-gradient(180deg,#808080 0,#808080 1px,transparent 1px,transparent 2px)"></div>
<div class="a" style="left:66px;top:522px;width:1px;height:33px;background:repeating-linear-gradient(180deg,#808080 0,#808080 1px,transparent 1px,transparent 2px)"></div>
<div class="a" style="left:47px;top:582px;width:1px;height:8px;background:repeating-linear-gradient(180deg,#808080 0,#808080 1px,transparent 1px,transparent 2px)"></div>
<div class="a" style="left:66px;top:602px;width:1px;height:33px;background:repeating-linear-gradient(180deg,#808080 0,#808080 1px,transparent 1px,transparent 2px)"></div>
<div class="a" style="left:47px;top:662px;width:1px;height:13px;background:repeating-linear-gradient(180deg,#808080 0,#808080 1px,transparent 1px,transparent 2px)"></div>
<div class="a" style="left:28px;top:722px;width:1px;height:13px;background:repeating-linear-gradient(180deg,#808080 0,#808080 1px,transparent 1px,transparent 2px)"></div>
<div class="a" style="left:14px;top:194px;width:6px;height:1px;background:repeating-linear-gradient(90deg,#808080 0,#808080 1px,transparent 1px,transparent 2px)"></div>
<div class="a" style="left:5px;top:190px;width:9px;height:9px;background:#fff;border:1px solid #919191"></div>
<div class="a" style="left:7px;top:194px;width:5px;height:1px;background:#000"></div>
<svg class="a" style="left:20px;top:186px" width="16" height="16" viewBox="0 0 16 16"><path d="M1 4h5l1.500 1.500H15v9.500H1z" fill="#e8b838" stroke="#a87808" stroke-width=".8"/><rect x="3" y="2" width="8" height="9" fill="#333"/><path d="M6 13l7-9" stroke="#1a48d0" stroke-width="2.500"/><circle cx="13" cy="4" r="2" fill="#1a48d0"/></svg>
<div class="tr" style="left:41px;top:186px">参数</div>
<div class="a" style="left:29px;top:214px;width:10px;height:1px;background:repeating-linear-gradient(90deg,#808080 0,#808080 1px,transparent 1px,transparent 2px)"></div>
<svg class="a" style="left:39px;top:206px" width="16" height="16" viewBox="0 0 16 16"><rect x="7" y="1" width="8" height="7" fill="#333"/><path d="M3 14l8-9" stroke="#1a48d0" stroke-width="2.500"/><circle cx="4" cy="13" r="3" fill="#c8d8f8" stroke="#6080c0" stroke-width=".7"/><circle cx="11" cy="5" r="2" fill="#1a48d0"/></svg>
<div class="tr" style="left:60px;top:206px">PLC参数</div>
<div class="a" style="left:33px;top:234px;width:6px;height:1px;background:repeating-linear-gradient(90deg,#808080 0,#808080 1px,transparent 1px,transparent 2px)"></div>
<div class="a" style="left:24px;top:230px;width:9px;height:9px;background:#fff;border:1px solid #919191"></div>
<div class="a" style="left:26px;top:234px;width:5px;height:1px;background:#000"></div>
<div class="a" style="left:28px;top:232px;width:1px;height:5px;background:#000"></div>
<svg class="a" style="left:39px;top:226px" width="16" height="16" viewBox="0 0 16 16"><path d="M1 4h5l1.500 1.500H15v9.500H1z" fill="#e8b838" stroke="#a87808" stroke-width=".8"/><rect x="4" y="1" width="6" height="6" fill="#333"/><rect x="9" y="7" width="6" height="7" fill="#333"/><path d="M6 7v4h3" stroke="#000" fill="none"/><rect x="5" y="9" width="3" height="4" fill="#fff" stroke="#000" stroke-width=".6"/></svg>
<div class="tr" style="left:60px;top:226px">网络参数</div>
<div class="a" style="left:29px;top:254px;width:10px;height:1px;background:repeating-linear-gradient(90deg,#808080 0,#808080 1px,transparent 1px,transparent 2px)"></div>
<svg class="a" style="left:39px;top:246px" width="16" height="16" viewBox="0 0 16 16"><path d="M2 15V7c0-6 9-6 9 0v8" fill="#e8eef4" stroke="#8aa0b0"/><rect x="6" y="9" width="3" height="6" fill="#e03030"/><rect x="10" y="8" width="5" height="7" fill="#333"/><rect x="11.500" y="9.500" width="2" height="2" fill="#ddd"/></svg>
<div class="tr" style="left:60px;top:246px">远程口令</div>
<div class="a" style="left:10px;top:274px;width:10px;height:1px;background:repeating-linear-gradient(90deg,#808080 0,#808080 1px,transparent 1px,transparent 2px)"></div>
<svg class="a" style="left:20px;top:266px" width="16" height="16" viewBox="0 0 16 16"><path d="M1 4h5l1.500 1.500H15v9.500H1z" fill="#e8b838" stroke="#a87808" stroke-width=".8"/><rect x="5" y="1" width="8" height="6" fill="#333"/><rect x="6" y="6" width="8" height="8" fill="#777" stroke="#222" stroke-width=".8"/><path d="M8 10h4M10 8v4" stroke="#ddd"/></svg>
<div class="tr" style="left:41px;top:266px">智能功能模块</div>
<div class="a" style="left:10px;top:294px;width:10px;height:1px;background:repeating-linear-gradient(90deg,#808080 0,#808080 1px,transparent 1px,transparent 2px)"></div>
<svg class="a" style="left:20px;top:286px" width="16" height="16" viewBox="0 0 16 16"><circle cx="7" cy="7" r="6" fill="#2468d0"/><path d="M2 5c1-3 5-4 7-2s0 4-2 4-2 2-4 1-1-2-1-3zM8 9c2-1 5 0 4 2s-3 2-4 1-1-2 0-3z" fill="#3cc040"/><path d="M3 3c2-2 5-2 7 0" stroke="#c8e8f8" stroke-width="1" fill="none" opacity=".7"/><path d="M7 6h7v9H7z" fill="#fff" stroke="#555" stroke-width=".7"/><path d="M9 13l5-6" stroke="#18a018" stroke-width="2"/></svg>
<div class="tr" style="left:41px;top:286px">全局软元件注释</div>
<div class="a" style="left:14px;top:314px;width:6px;height:1px;background:repeating-linear-gradient(90deg,#808080 0,#808080 1px,transparent 1px,transparent 2px)"></div>
<div class="a" style="left:5px;top:310px;width:9px;height:9px;background:#fff;border:1px solid #919191"></div>
<div class="a" style="left:7px;top:314px;width:5px;height:1px;background:#000"></div>
<svg class="a" style="left:20px;top:306px" width="16" height="16" viewBox="0 0 16 16"><path d="M1 4h5l1.500 1.500H15v9.500H1z" fill="#e8b838" stroke="#a87808" stroke-width=".8"/><circle cx="8" cy="6" r="4.500" fill="#2878d8"/><path d="M5 5c1-2 3-1 3 0s-1 2-2 2z" fill="#38b838"/><rect x="6.500" y="7.500" width="8" height="7" fill="#fff" stroke="#4848e0"/><path d="M6.500 10h8M6.500 12.500h8M9.500 7.500v7" stroke="#4848e0"/></svg>
<div class="tr" style="left:41px;top:306px">全局标签</div>
<div class="a" style="left:29px;top:334px;width:10px;height:1px;background:repeating-linear-gradient(90deg,#808080 0,#808080 1px,transparent 1px,transparent 2px)"></div>
<svg class="a" style="left:39px;top:326px" width="16" height="16" viewBox="0 0 16 16"><circle cx="7" cy="7" r="6" fill="#2468d0"/><path d="M2 5c1-3 5-4 7-2s0 4-2 4-2 2-4 1-1-2-1-3zM8 9c2-1 5 0 4 2s-3 2-4 1-1-2 0-3z" fill="#3cc040"/><path d="M3 3c2-2 5-2 7 0" stroke="#c8e8f8" stroke-width="1" fill="none" opacity=".7"/><rect x="6.500" y="7.500" width="9" height="8" fill="#fff" stroke="#4848e0"/><path d="M6.500 10h9M6.500 12.500h9M9.500 7.500v8" stroke="#4848e0"/></svg>
<div class="tr" style="left:60px;top:326px">Global1</div>
<div class="a" style="left:14px;top:354px;width:6px;height:1px;background:repeating-linear-gradient(90deg,#808080 0,#808080 1px,transparent 1px,transparent 2px)"></div>
<div class="a" style="left:5px;top:350px;width:9px;height:9px;background:#fff;border:1px solid #919191"></div>
<div class="a" style="left:7px;top:354px;width:5px;height:1px;background:#000"></div>
<svg class="a" style="left:20px;top:346px" width="16" height="16" viewBox="0 0 16 16"><path d="M1 8l4-5h10v8l-3 3H1z" fill="#e8b838" stroke="#a87808" stroke-width=".8"/><path d="M2 7l3-4 8 3-1 3z" fill="#18a048"/><rect x="6" y="9" width="9" height="4" fill="#333"/></svg>
<div class="tr" style="left:41px;top:346px">程序设置</div>
<div class="a" style="left:29px;top:374px;width:10px;height:1px;background:repeating-linear-gradient(90deg,#808080 0,#808080 1px,transparent 1px,transparent 2px)"></div>
<svg class="a" style="left:39px;top:366px" width="16" height="16" viewBox="0 0 16 16"><path d="M1 4h5l1.500 1.500H15v9.500H1z" fill="#e8b838" stroke="#a87808" stroke-width=".8"/><rect x="5" y="1" width="4" height="13" fill="#e02828"/><rect x="6" y="2" width="2" height="11" fill="#f8a0a0"/><rect x="10" y="1" width="5" height="13" fill="#333"/><path d="M11.500 3v9M13.500 3v9" stroke="#999" stroke-width=".7"/></svg>
<div class="tr" style="left:60px;top:366px">初始程序</div>
<div class="a" style="left:33px;top:394px;width:6px;height:1px;background:repeating-linear-gradient(90deg,#808080 0,#808080 1px,transparent 1px,transparent 2px)"></div>
<div class="a" style="left:24px;top:390px;width:9px;height:9px;background:#fff;border:1px solid #919191"></div>
<div class="a" style="left:26px;top:394px;width:5px;height:1px;background:#000"></div>
<div class="a" style="left:28px;top:392px;width:1px;height:5px;background:#000"></div>
<svg class="a" style="left:39px;top:386px" width="16" height="16" viewBox="0 0 16 16"><path d="M1 4h5l1.500 1.500H15v9.500H1z" fill="#e8b838" stroke="#a87808" stroke-width=".8"/><rect x="5" y="1" width="4" height="13" fill="#e02828"/><rect x="6" y="2" width="2" height="11" fill="#f8a0a0"/><rect x="10" y="1" width="5" height="13" fill="#333"/><path d="M11.500 3v9M13.500 3v9" stroke="#999" stroke-width=".7"/></svg>
<div class="tr" style="left:60px;top:386px">扫描程序</div>
<div class="a" style="left:29px;top:414px;width:10px;height:1px;background:repeating-linear-gradient(90deg,#808080 0,#808080 1px,transparent 1px,transparent 2px)"></div>
<svg class="a" style="left:39px;top:406px" width="16" height="16" viewBox="0 0 16 16"><path d="M1 4h5l1.500 1.500H15v9.500H1z" fill="#e8b838" stroke="#a87808" stroke-width=".8"/><rect x="5" y="1" width="4" height="13" fill="#e02828"/><rect x="6" y="2" width="2" height="11" fill="#f8a0a0"/><rect x="10" y="1" width="5" height="13" fill="#333"/><path d="M11.500 3v9M13.500 3v9" stroke="#999" stroke-width=".7"/></svg>
<div class="tr" style="left:60px;top:406px">待机程序</div>
<div class="a" style="left:29px;top:434px;width:10px;height:1px;background:repeating-linear-gradient(90deg,#808080 0,#808080 1px,transparent 1px,transparent 2px)"></div>
<svg class="a" style="left:39px;top:426px" width="16" height="16" viewBox="0 0 16 16"><path d="M1 4h5l1.500 1.500H15v9.500H1z" fill="#e8b838" stroke="#a87808" stroke-width=".8"/><rect x="5" y="1" width="4" height="13" fill="#e02828"/><rect x="6" y="2" width="2" height="11" fill="#f8a0a0"/><rect x="10" y="1" width="5" height="13" fill="#333"/><path d="M11.500 3v9M13.500 3v9" stroke="#999" stroke-width=".7"/></svg>
<div class="tr" style="left:60px;top:426px">恒定周期程序</div>
<div class="a" style="left:29px;top:454px;width:10px;height:1px;background:repeating-linear-gradient(90deg,#808080 0,#808080 1px,transparent 1px,transparent 2px)"></div>
<svg class="a" style="left:39px;top:446px" width="16" height="16" viewBox="0 0 16 16"><path d="M1 4h5l1.500 1.500H15v9.500H1z" fill="#e8b838" stroke="#a87808" stroke-width=".8"/><rect x="5" y="1" width="4" height="13" fill="#e02828"/><rect x="6" y="2" width="2" height="11" fill="#f8a0a0"/><rect x="10" y="1" width="5" height="13" fill="#333"/><path d="M11.500 3v9M13.500 3v9" stroke="#999" stroke-width=".7"/></svg>
<div class="tr" style="left:60px;top:446px">无执行类型指定</div>
<div class="a" style="left:14px;top:474px;width:6px;height:1px;background:repeating-linear-gradient(90deg,#808080 0,#808080 1px,transparent 1px,transparent 2px)"></div>
<div class="a" style="left:5px;top:470px;width:9px;height:9px;background:#fff;border:1px solid #919191"></div>
<div class="a" style="left:7px;top:474px;width:5px;height:1px;background:#000"></div>
<svg class="a" style="left:20px;top:466px" width="16" height="16" viewBox="0 0 16 16"><path d="M1 9l2-5h11l2 5v6H1z" fill="#f0d060" stroke="#a88810" stroke-width=".7"/><path d="M3 8l2-6 4 1 3-2 2 7z" fill="#f8a0b0"/><path d="M7 2l4-1 2 6H6z" fill="#78c858"/><path d="M1 9h15v6H1z" fill="#f4dc78" stroke="#a88810" stroke-width=".7"/></svg>
<div class="tr" style="left:41px;top:466px">程序部件</div>
<div class="a" style="left:33px;top:494px;width:6px;height:1px;background:repeating-linear-gradient(90deg,#808080 0,#808080 1px,transparent 1px,transparent 2px)"></div>
<div class="a" style="left:24px;top:490px;width:9px;height:9px;background:#fff;border:1px solid #919191"></div>
<div class="a" style="left:26px;top:494px;width:5px;height:1px;background:#000"></div>
<svg class="a" style="left:39px;top:486px" width="16" height="16" viewBox="0 0 16 16"><path d="M3.500 .5h6l3 3v9h-9z" fill="#eef2fa" stroke="#7888a8"/><path d="M5.500 2.500h6l3 3v9h-9z" fill="#fff" stroke="#7888a8"/><path d="M1 7h8l1 1.500h5V15H1z" fill="#f0d888" stroke="#b89838" stroke-width=".8" opacity=".95"/></svg>
<div class="tr" style="left:60px;top:486px">程序</div>
<div class="a" style="left:52px;top:514px;width:6px;height:1px;background:repeating-linear-gradient(90deg,#808080 0,#808080 1px,transparent 1px,transparent 2px)"></div>
<div class="a" style="left:43px;top:510px;width:9px;height:9px;background:#fff;border:1px solid #919191"></div>
<div class="a" style="left:45px;top:514px;width:5px;height:1px;background:#000"></div>
<svg class="a" style="left:58px;top:506px" width="16" height="16" viewBox="0 0 16 16"><path d="M0 5h4l1 1v9H0z" fill="#e8b838" stroke="#a87808" stroke-width=".8"/><path d="M3.500 .5h7l3 3v12h-10z" fill="#f4f6fc" stroke="#8890a8"/><path d="M10.500 .5v3h3" fill="none" stroke="#8890a8" stroke-width=".7"/><path d="M6 2v5.500M8.500 2v5.500" stroke="#1a3ad0" stroke-width="1.400"/><path d="M4.500 4.700h1.500M8.500 4.700h2" stroke="#1a3ad0" stroke-width="1.200"/><path d="M8 8v5.500M10.500 8v5.500" stroke="#d01030" stroke-width="1.400"/><path d="M6 10.700h2M10.500 10.700h2" stroke="#d01030" stroke-width="1.200"/><path d="M0 12h9v3.500H0z" fill="#f0c850" stroke="#a87808" stroke-width=".6"/></svg>
<div class="tr" style="left:79px;top:506px">POU_01</div>
<div class="a" style="left:67px;top:534px;width:10px;height:1px;background:repeating-linear-gradient(90deg,#808080 0,#808080 1px,transparent 1px,transparent 2px)"></div>
<svg class="a" style="left:77px;top:526px" width="16" height="16" viewBox="0 0 16 16"><path d="M3.500 .5h7l3 3v12h-10z" fill="#f4f6fc" stroke="#8890a8"/><path d="M10.500 .5v3h3" fill="none" stroke="#8890a8" stroke-width=".7"/><path d="M6 2v5.500M8.500 2v5.500" stroke="#1a3ad0" stroke-width="1.400"/><path d="M4.500 4.700h1.500M8.500 4.700h2" stroke="#1a3ad0" stroke-width="1.200"/><path d="M8 8v5.500M10.500 8v5.500" stroke="#d01030" stroke-width="1.400"/><path d="M6 10.700h2M10.500 10.700h2" stroke="#d01030" stroke-width="1.200"/></svg>
<div class="tr" style="left:98px;top:526px">程序本体</div>
<div class="a" style="left:67px;top:554px;width:10px;height:1px;background:repeating-linear-gradient(90deg,#808080 0,#808080 1px,transparent 1px,transparent 2px)"></div>
<svg class="a" style="left:77px;top:546px" width="16" height="16" viewBox="0 0 16 16"><rect x="1" y="0" width="9" height="10" fill="#a8d0f0" opacity=".85" transform="rotate(-8 5 5)"/><rect x="5.500" y="6.500" width="10" height="9" fill="#fff" stroke="#4848e0"/><path d="M5.500 9.500h10M5.500 12.500h10M9 6.500v9" stroke="#4848e0"/></svg>
<div class="tr" style="left:98px;top:546px">局部标签</div>
<div class="a" style="left:33px;top:574px;width:6px;height:1px;background:repeating-linear-gradient(90deg,#808080 0,#808080 1px,transparent 1px,transparent 2px)"></div>
<div class="a" style="left:24px;top:570px;width:9px;height:9px;background:#fff;border:1px solid #919191"></div>
<div class="a" style="left:26px;top:574px;width:5px;height:1px;background:#000"></div>
<svg class="a" style="left:39px;top:566px" width="16" height="16" viewBox="0 0 16 16"><path d="M1 4h5l1.500 1.500H15v9.500H1z" fill="#e8b838" stroke="#a87808" stroke-width=".8"/><rect x="4" y="1" width="10" height="5" fill="#3858c8"/><rect x="3" y="5" width="12" height="8" fill="#28a048"/><path d="M5 7h3M5 9h3M5 11h3" stroke="#fff" stroke-width=".8"/></svg>
<div class="tr" style="left:60px;top:566px">FB/FUN</div>
<div class="a" style="left:52px;top:594px;width:6px;height:1px;background:repeating-linear-gradient(90deg,#808080 0,#808080 1px,transparent 1px,transparent 2px)"></div>
<div class="a" style="left:43px;top:590px;width:9px;height:9px;background:#fff;border:1px solid #919191"></div>
<div class="a" style="left:45px;top:594px;width:5px;height:1px;background:#000"></div>
<svg class="a" style="left:58px;top:586px" width="16" height="16" viewBox="0 0 16 16"><path d="M1 4h5l1.500 1.500H15v9.500H1z" fill="#e8b838" stroke="#a87808" stroke-width=".8"/><rect x="4" y="5" width="9" height="7" fill="#3040d0"/><rect x="5" y="6" width="7" height="3" fill="#b0c0f8"/></svg>
<div class="tr" style="left:79px;top:586px">FunTest</div>
<div class="a" style="left:67px;top:614px;width:10px;height:1px;background:repeating-linear-gradient(90deg,#808080 0,#808080 1px,transparent 1px,transparent 2px)"></div>
<svg class="a" style="left:77px;top:606px" width="16" height="16" viewBox="0 0 16 16"><path d="M2.500 .5h8l3 3v12h-11z" fill="#f4f4f4" stroke="#777"/><text x="3" y="13" font-family="Liberation Sans,sans-serif" font-weight="bold" font-size="8" fill="#222" textLength="10" lengthAdjust="spacingAndGlyphs">ST</text></svg>
<div class="tr" style="left:98px;top:606px">程序本体</div>
<div class="a" style="left:67px;top:634px;width:10px;height:1px;background:repeating-linear-gradient(90deg,#808080 0,#808080 1px,transparent 1px,transparent 2px)"></div>
<svg class="a" style="left:77px;top:626px" width="16" height="16" viewBox="0 0 16 16"><rect x="1" y="0" width="9" height="10" fill="#a8d0f0" opacity=".85" transform="rotate(-8 5 5)"/><rect x="5.500" y="6.500" width="10" height="9" fill="#fff" stroke="#4848e0"/><path d="M5.500 9.500h10M5.500 12.500h10M9 6.500v9" stroke="#4848e0"/></svg>
<div class="tr" style="left:98px;top:626px">局部标签</div>
<div class="a" style="left:33px;top:654px;width:6px;height:1px;background:repeating-linear-gradient(90deg,#808080 0,#808080 1px,transparent 1px,transparent 2px)"></div>
<div class="a" style="left:24px;top:650px;width:9px;height:9px;background:#fff;border:1px solid #919191"></div>
<div class="a" style="left:26px;top:654px;width:5px;height:1px;background:#000"></div>
<svg class="a" style="left:39px;top:646px" width="16" height="16" viewBox="0 0 16 16"><path d="M1 4h5l1.500 1.500H15v9.500H1z" fill="#e8b838" stroke="#a87808" stroke-width=".8"/><g transform="translate(2,1) scale(.85)"><rect x="4" y="1" width="11" height="14" fill="#222"/><rect x="7" y="2" width="7" height="3" fill="#e83060"/><rect x="7" y="6" width="7" height="3" fill="#f8e838"/><rect x="7" y="10" width="7" height="4" fill="#38b838"/><path d="M2 4h4M2 8h4M2 12h4M2 4v8" stroke="#000" stroke-width="1.200" fill="none"/></g></svg>
<div class="tr" style="left:60px;top:646px">结构体</div>
<div class="a" style="left:48px;top:674px;width:10px;height:1px;background:repeating-linear-gradient(90deg,#808080 0,#808080 1px,transparent 1px,transparent 2px)"></div>
<svg class="a" style="left:58px;top:666px" width="16" height="16" viewBox="0 0 16 16"><rect x="4" y="1" width="11" height="14" fill="#222"/><rect x="7" y="2" width="7" height="3" fill="#e83060"/><rect x="7" y="6" width="7" height="3" fill="#f8e838"/><rect x="7" y="10" width="7" height="4" fill="#38b838"/><path d="M2 4h4M2 8h4M2 12h4M2 4v8" stroke="#000" stroke-width="1.200" fill="none"/></svg>
<div class="tr" style="left:79px;top:666px">st_test</div>
<div class="a" style="left:29px;top:694px;width:10px;height:1px;background:repeating-linear-gradient(90deg,#808080 0,#808080 1px,transparent 1px,transparent 2px)"></div>
<svg class="a" style="left:39px;top:686px" width="16" height="16" viewBox="0 0 16 16"><path d="M3.500 .5h6l3 3v9h-9z" fill="#eef2fa" stroke="#7888a8"/><path d="M5.500 2.500h6l3 3v9h-9z" fill="#fff" stroke="#7888a8"/><path d="M1 7h8l1 1.500h5V15H1z" fill="#f0d888" stroke="#b89838" stroke-width=".8" opacity=".95"/></svg>
<div class="tr" style="left:60px;top:686px">局部软元件注释</div>
<div class="a" style="left:14px;top:714px;width:6px;height:1px;background:repeating-linear-gradient(90deg,#808080 0,#808080 1px,transparent 1px,transparent 2px)"></div>
<div class="a" style="left:5px;top:710px;width:9px;height:9px;background:#fff;border:1px solid #919191"></div>
<div class="a" style="left:7px;top:714px;width:5px;height:1px;background:#000"></div>
<svg class="a" style="left:20px;top:706px" width="16" height="16" viewBox="0 0 16 16"><path d="M1 4h5l1.500 1.500H15v9.500H1z" fill="#e8b838" stroke="#a87808" stroke-width=".8"/><g transform="translate(1,0) scale(.85)"><rect x="4" y="2" width="11" height="11" fill="#fff" stroke="#222"/><rect x="4" y="1" width="11" height="4" fill="#222"/><path d="M4 8h11M4 10.500h11M8 5v8M11.500 5v8" stroke="#999" stroke-width=".7"/></g><circle cx="7" cy="11" r="3.500" fill="#3a78e0"/><path d="M7 11l3-2v3z" fill="#e02020"/><path d="M4 12.500l3 1.500 2-1.500" fill="#30b030"/></svg>
<div class="tr" style="left:41px;top:706px">软元件存储器</div>
<div class="a" style="left:29px;top:734px;width:10px;height:1px;background:repeating-linear-gradient(90deg,#808080 0,#808080 1px,transparent 1px,transparent 2px)"></div>
<svg class="a" style="left:39px;top:726px" width="16" height="16" viewBox="0 0 16 16"><rect x="4" y="2" width="11" height="11" fill="#fff" stroke="#222"/><rect x="4" y="1" width="11" height="4" fill="#222"/><path d="M4 8h11M4 10.500h11M8 5v8M11.500 5v8" stroke="#999" stroke-width=".7"/><circle cx="4.500" cy="11.500" r="3.500" fill="#3a78e0"/><path d="M4.500 11.500l3-2v3z" fill="#e02020"/><path d="M1.500 13l3 1.500 2-1.500" fill="#30b030"/></svg>
<div class="tr" style="left:60px;top:726px">MAIN</div>
<div class="a" style="left:10px;top:754px;width:10px;height:1px;background:repeating-linear-gradient(90deg,#808080 0,#808080 1px,transparent 1px,transparent 2px)"></div>
<svg class="a" style="left:20px;top:746px" width="16" height="16" viewBox="0 0 16 16"><path d="M1 4h5l1.500 1.500H15v9.500H1z" fill="#e8b838" stroke="#a87808" stroke-width=".8"/><g transform="translate(1,0) scale(.85)"><rect x="4" y="2" width="11" height="11" fill="#fff" stroke="#222"/><rect x="4" y="1" width="11" height="4" fill="#222"/><path d="M4 8h11M4 10.500h11M8 5v8M11.500 5v8" stroke="#999" stroke-width=".7"/></g><rect x="3" y="9" width="6" height="5" fill="#f8e8a0" stroke="#a88810" stroke-width=".6"/></svg>
<div class="tr" style="left:41px;top:746px">软元件初始值</div>
<div class="a" style="left:0px;top:884px;width:454px;height:7px;background:linear-gradient(180deg,#d4d3e2,#9f9dbb)"></div>
<div class="a" style="left:209px;top:885px;width:36px;height:3px;background:repeating-linear-gradient(110deg,#3d3b5c 0,#3d3b5c 1.500px,#e8e8f0 1.500px,#e8e8f0 3.500px)"></div>
<div class="pb" style="top:891px;background:linear-gradient(180deg,#fde8a8 0,#fbd27a 30%,#f3ae3c 70%,#eda22c 100%);border-bottom-color:#9f7a3a"><div class="pbt">工程</div></div>
<div class="pb" style="top:923px"><div class="pbt">用户库</div></div>
<div class="pb" style="top:955px"><div class="pbt">连接目标</div></div>
<div class="pb" style="top:987px;height:32px"></div>
<svg class="a" style="left:438px;top:996px" width="8" height="14" viewBox="0 0 8 14"><path d="M1 1l2.500 2.500L1 6M4.500 1L7 3.500 4.500 6" stroke="#000" fill="none"/><path d="M1.500 10h5l-2.500 3z" fill="#000"/></svg>
<svg class="a" style="left:5px;top:893px" width="26" height="26" viewBox="0 0 26 26"><path d="M6 3l13-2v18L6 17z" fill="#5c5c5c"/><path d="M8 5l9-1.500v12L8 14.500z" fill="#8a8a8a"/><path d="M6 17L1 20l8 1 5-3z" fill="#9a9a9a"/><rect x="11" y="10" width="4.500" height="16" fill="#e03414"/><rect x="11" y="10" width="1.500" height="16" fill="#f07858"/><rect x="12" y="8" width="2.500" height="2.500" fill="#c02000"/><rect x="16" y="9" width="9.500" height="17" fill="#2c2c2c"/><rect x="20" y="12" width="4" height="3" fill="#f4f4f4"/><path d="M20 17.500h4M20 20h4M20 22.500h4" stroke="#b8b8b8" stroke-width="1.400"/><path d="M17.500 11v8" stroke="#38b060" stroke-width="1.200"/></svg>
<svg class="a" style="left:5px;top:927px" width="26" height="26" viewBox="0 0 26 26"><path d="M1 2c4-1.500 8-1.500 11 0v16c-3-1.500-7-1.500-11 0z" fill="#efe6d2" stroke="#5a4a32"/><path d="M23 2c-4-1.500-8-1.500-11 0v16c3-1.500 7-1.500 11 0z" fill="#f6f0e2" stroke="#5a4a32"/><path d="M3 5h7M3 7.500h7M3 10h7M3 12.500h7M14 5h7M14 7.500h5" stroke="#c8bca0" stroke-width=".8"/><path d="M10 18h4v2h-4z" fill="#5a4a32"/><path d="M17 8.500c1-1 2-.5 2.500.5l3 5c1.500 1 2.500 2.500 2.500 5v4h-8v-3l-2-4 1.500-1.500 1.500 1.500z" fill="#f2c838" stroke="#b08c18" stroke-width=".7"/><rect x="16.500" y="22.500" width="9" height="3" fill="#44b04c"/></svg>
<svg class="a" style="left:5px;top:957px" width="26" height="26" viewBox="0 0 26 26"><path d="M5 3.500l13-2v13l-13 1z" fill="#3a3a3a"/><path d="M6.500 5l10-1.500v9.500l-10 .8z" fill="#28c8f8"/><path d="M7 5.500l6-1v6l-6 1z" fill="#78e0fc" opacity=".7"/><path d="M3 17l14-1 2 3-15 1z" fill="#c8c8c8" stroke="#8a8a8a" stroke-width=".6"/><path d="M4 6H2v15h12" fill="none" stroke="#189a28" stroke-width="1.800"/><rect x="15" y="7" width="10" height="19" fill="#2c2c2c"/><path d="M17 10h6M17 12.500h6M17 15h6" stroke="#8a8a8a" stroke-width="1.200"/><rect x="17" y="18" width="6" height="2.500" fill="#111"/><rect x="17" y="22" width="6" height="2" fill="#555"/><path d="M22.500 10v5" stroke="#38d060" stroke-width="1"/></svg>
<div class="a" style="left:0px;top:133px;width:1px;height:886px;background:#8f8db0"></div>
<div class="a" style="left:0px;top:1020px;width:1920px;height:20px;background:#f0f0f0"></div>
<div class="a" style="left:0px;top:1019px;width:458px;height:1px;background:#f0f0f0"></div>
<div class="a" style="left:871px;top:1022px;width:1px;height:17px;background:#c8c8c8"></div>
<div class="a" style="left:969px;top:1022px;width:1px;height:17px;background:#c8c8c8"></div>
<div class="a" style="left:1057px;top:1022px;width:1px;height:17px;background:#c8c8c8"></div>
<div class="a" style="left:1306px;top:1022px;width:1px;height:17px;background:#c8c8c8"></div>
<div class="a" style="left:1412px;top:1022px;width:1px;height:17px;background:#c8c8c8"></div>
<div class="a" style="left:1621px;top:1022px;width:1px;height:17px;background:#c8c8c8"></div>
<div class="a" style="left:1789px;top:1022px;width:1px;height:17px;background:#c8c8c8"></div>
<div class="a" style="left:1847px;top:1022px;width:1px;height:17px;background:#c8c8c8"></div>
<div class="a" style="left:1883px;top:1022px;width:1px;height:17px;background:#c8c8c8"></div>
<div class="t" style="left:876px;top:1024px;">简体中文</div>
<div class="t" style="left:974px;top:1024px;">结构化</div>
<div class="t" style="left:1311px;top:1024px;">Q06UDV</div>
<div class="t" style="left:1418px;top:1024px;">模拟</div>
<div class="t" style="left:1852px;top:1024px;">大写</div>
<div class="t" style="left:1888px;top:1024px;">数字</div>
<div class="a" style="left:628px;top:1018px;width:167px;height:22px;background:#fff;border:1px solid #767676;box-shadow:1px 1px 2px rgba(0,0,0,.3)"></div>
<div class="t" style="left:634px;top:1021px;color:#575757;letter-spacing:.15px">EPLAN Electric P8 2.7 (x64)</div>
<div class="a" style="left:1700px;top:968px;width:90px;height:42px;background:#32343f;border-radius:21px"></div>
<div class="a" style="left:1670px;top:958px;width:60px;height:60px;background:#575b6c;border-radius:30px;box-shadow:0 0 3px rgba(0,0,0,.4)"></div>
<svg class="a" style="left:1670px;top:958px" width="60" height="60"><defs><linearGradient id="ng" x1="0" y1="0" x2="0" y2="1"><stop offset="0" stop-color="#3fd8c8"/><stop offset="1" stop-color="#e8d84a"/></linearGradient></defs><path d="M30 5A25 25 0 0 1 30 55" fill="none" stroke="url(#ng)" stroke-width="2"/></svg>
<div class="t" style="left:1683px;top:971px;color:#fff;font-size:26px;line-height:30px;letter-spacing:-.3px;font-weight:300;font-family:'Noto Sans CJK SC','Liberation Sans',sans-serif">50</div>
<div class="t" style="left:1711px;top:988px;color:#fff;font-size:10px;line-height:12px">%</div>
<div class="t" style="left:1749px;top:972px;color:#fff;font-size:12px;line-height:14px">0.1<span style="color:#9a9ca6;font-size:10px">K/s</span></div>
<div class="t" style="left:1749px;top:993px;color:#fff;font-size:12px;line-height:14px">0.6<span style="color:#9a9ca6;font-size:10px">K/s</span></div>
<svg class="a" style="left:1733px;top:974px" width="8" height="8"><path d="M4 8V1M1 4L4 1L7 4" stroke="#3db4f0" stroke-width="1.5" fill="none"/></svg>
<svg class="a" style="left:1733px;top:995px" width="8" height="8"><path d="M4 0V7M1 4L4 7L7 4" stroke="#30c040" stroke-width="1.5" fill="none"/></svg>
<div class="a" style="left:1732px;top:989px;width:56px;height:1px;background:#464855"></div>
</body></html>
